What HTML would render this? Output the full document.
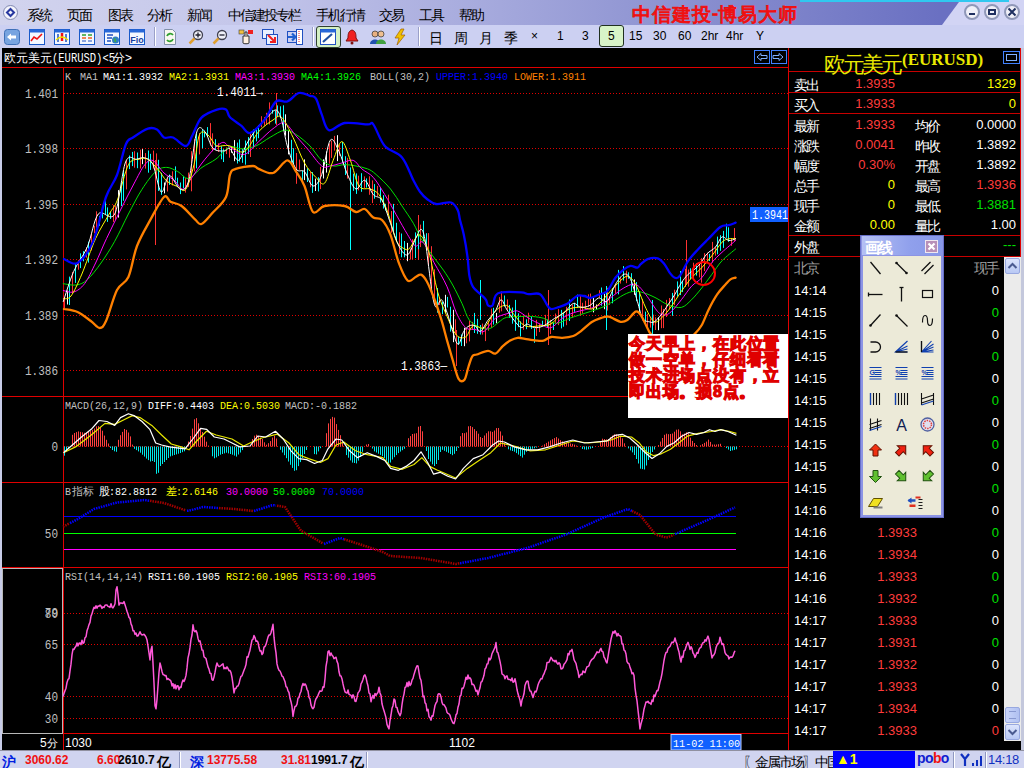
<!DOCTYPE html>
<html><head><meta charset="utf-8"><style>
*{box-sizing:border-box}
body{margin:0;width:1024px;height:768px;overflow:hidden;background:#000;position:relative;font-family:"Liberation Sans",sans-serif}
.a{position:absolute;white-space:nowrap}
.c{display:inline-block;width:0.86em;font-size:1.17em;font-style:normal;vertical-align:-1px}
#menu{left:0;top:0;width:1024px;height:25px;background:linear-gradient(to right,#d2d4ee 0px,#c4c6ea 250px,#a4a8dc 500px,#8288cc 750px,#6a70c2 940px)}
#menu .t{font-size:12px;top:6px;color:#000}
#tool{left:0;top:25px;width:1024px;height:23px;background:#ccd0f2}
#tool .t{font-size:12px;top:4px;color:#000}
.ic{position:absolute;top:4px;width:16px;height:16px}
.sep{position:absolute;top:2px;width:2px;height:19px;border-left:1px solid #9aa0c8;border-right:1px solid #fff}
.rp{font-size:12px;color:#fff}
.red{color:#ff3030}.yel{color:#ffff00}.grn{color:#00ff00}.wht{color:#fff}.gry{color:#a0a0a0}
.ttl .c{width:20px;font-size:19px}
#status{left:0;top:750px;width:1024px;height:18px;background:#d0d4f0;border-top:1px solid #9090a0}
#status .t{font-size:12px;top:2px;font-weight:bold}
</style></head><body>
<svg class="a" style="left:0;top:0" width="1024" height="768">
<rect x="0" y="48" width="2" height="702" fill="#c8cce8"/>
<line x1="2" y1="67.5" x2="788" y2="67.5" stroke="#e00000"/>
<line x1="2" y1="396.5" x2="788" y2="396.5" stroke="#e00000"/>
<line x1="2" y1="482.5" x2="788" y2="482.5" stroke="#e00000"/>
<line x1="2" y1="567.5" x2="788" y2="567.5" stroke="#e00000"/>
<line x1="2" y1="733.5" x2="788" y2="733.5" stroke="#e00000"/>
<line x1="63.5" y1="67" x2="63.5" y2="750" stroke="#e00000"/>
<line x1="788.5" y1="48" x2="788.5" y2="750" stroke="#e00000"/>
<line x1="64" y1="93.5" x2="788" y2="93.5" stroke="#e00000" stroke-dasharray="1 2"/>
<line x1="64" y1="148.5" x2="788" y2="148.5" stroke="#e00000" stroke-dasharray="1 2"/>
<line x1="64" y1="204.5" x2="788" y2="204.5" stroke="#e00000" stroke-dasharray="1 2"/>
<line x1="64" y1="259.5" x2="788" y2="259.5" stroke="#e00000" stroke-dasharray="1 2"/>
<line x1="64" y1="315.5" x2="788" y2="315.5" stroke="#e00000" stroke-dasharray="1 2"/>
<line x1="64" y1="370.5" x2="788" y2="370.5" stroke="#e00000" stroke-dasharray="1 2"/>
<line x1="64" y1="446.5" x2="788" y2="446.5" stroke="#e00000" stroke-dasharray="1 2"/>
<line x1="64" y1="613.5" x2="788" y2="613.5" stroke="#e00000" stroke-dasharray="1 2"/>
<line x1="64" y1="644.5" x2="788" y2="644.5" stroke="#e00000" stroke-dasharray="1 2"/>
<line x1="64" y1="696.5" x2="788" y2="696.5" stroke="#e00000" stroke-dasharray="1 2"/>
<line x1="64" y1="718.5" x2="788" y2="718.5" stroke="#e00000" stroke-dasharray="1 2"/>
<rect x="2.5" y="568.5" width="60" height="165" fill="none" stroke="#b8b8b8"/>
<line x1="64" y1="516.5" x2="736" y2="516.5" stroke="#0000ff"/>
<line x1="64" y1="533.5" x2="736" y2="533.5" stroke="#00ff00"/>
<line x1="64" y1="549.5" x2="736" y2="549.5" stroke="#ff00ff"/>
<path d="M64.5 297.1V308.0M72.5 271.9V293.3M78.5 260.1V269.7M86.5 247.1V257.6M91.5 233.0V250.4M94.5 225.8V233.3M96.5 211.3V227.8M113.5 205.1V221.9M115.5 205.6V220.1M126.5 160.0V189.4M134.5 151.2V167.7M140.5 149.6V168.5M145.5 153.1V168.6M153.5 150.6V168.5M156.5 153.4V178.0M167.5 177.8V191.5M172.5 171.3V185.5M185.5 178.2V192.6M188.5 172.6V187.1M191.5 151.2V191.3M194.5 138.9V171.4M199.5 133.0V154.4M210.5 123.1V145.7M212.5 133.3V151.3M218.5 143.2V152.0M226.5 147.4V154.1M229.5 148.2V157.7M250.5 133.3V157.0M261.5 116.2V127.3M264.5 117.1V125.7M266.5 112.8V124.4M269.5 102.4V124.5M296.5 153.0V183.8M299.5 159.5V169.7M310.5 172.0V187.2M320.5 166.9V189.1M329.5 143.6V163.7M331.5 140.7V157.9M334.5 135.9V150.6M339.5 144.8V155.8M347.5 157.8V178.6M358.5 175.7V190.4M364.5 176.4V188.1M369.5 176.3V194.8M372.5 180.4V203.1M377.5 185.9V196.5M388.5 194.7V214.7M391.5 211.0V232.7M399.5 232.2V254.0M410.5 248.5V259.6M412.5 239.2V259.4M420.5 224.6V247.1M428.5 233.1V265.3M431.5 246.2V293.8M434.5 269.3V304.6M439.5 297.7V305.0M455.5 319.3V334.7M466.5 328.9V343.3M469.5 320.5V341.4M472.5 321.9V330.0M482.5 323.6V334.6M485.5 325.8V341.1M488.5 321.2V330.7M491.5 308.6V328.0M499.5 297.1V312.8M501.5 291.1V311.3M507.5 299.4V309.7M523.5 316.0V329.8M528.5 312.7V323.1M536.5 319.8V336.0M539.5 323.6V332.1M545.5 314.8V325.7M550.5 319.8V334.1M555.5 313.5V323.4M558.5 309.2V325.1M566.5 306.8V325.2M572.5 304.8V317.7M580.5 295.2V315.6M582.5 302.8V313.6M585.5 300.7V309.0M588.5 294.3V306.9M590.5 293.6V308.2M599.5 290.2V297.9M607.5 287.8V310.5M609.5 296.2V304.8M615.5 284.0V293.6M620.5 277.8V283.6M626.5 270.7V283.2M642.5 299.0V320.6M647.5 313.8V328.5M650.5 318.5V327.6M653.5 314.6V325.4M655.5 317.3V330.0M661.5 305.5V328.2M663.5 308.9V328.1M666.5 299.9V317.0M669.5 298.0V309.6M674.5 289.7V305.2M685.5 268.7V287.0M688.5 269.5V286.6M693.5 262.7V278.8M699.5 263.8V277.4M701.5 258.1V282.7M704.5 253.2V271.1M707.5 252.7V261.1M712.5 241.9V262.7M715.5 246.5V255.7M731.5 238.7V245.8M734.5 228.1V241.5M155.5 160V245M276.5 93V125M456.5 330V366M548.5 290V345M686.5 240V285M418.5 215V260" stroke="#ff3232" stroke-width="1"/>
<path d="M69.5 276.6V305.0M75.5 263.4V282.9M80.5 253.4V268.1M83.5 251.2V261.3M88.5 241.7V262.6M99.5 216.0V225.9M102.5 208.7V218.4M105.5 200.0V214.7M107.5 207.4V221.9M110.5 211.6V219.0M121.5 183.1V206.0M123.5 170.0V200.8M129.5 155.5V169.1M132.5 151.9V166.1M137.5 152.5V168.2M148.5 150.5V172.7M150.5 153.8V169.9M158.5 159.8V190.9M161.5 172.8V194.8M169.5 174.5V184.9M175.5 166.4V180.6M177.5 177.7V185.5M180.5 182.5V194.1M183.5 175.9V188.3M196.5 133.3V168.3M202.5 129.1V148.3M204.5 130.5V137.4M207.5 127.1V137.0M215.5 139.2V149.9M221.5 146.3V159.3M223.5 149.2V162.0M237.5 142.6V163.5M239.5 139.5V161.6M242.5 148.9V162.8M245.5 140.5V164.7M248.5 137.1V154.1M253.5 129.5V147.7M256.5 128.3V141.4M258.5 125.0V138.2M272.5 109.9V113.7M275.5 110.6V123.6M277.5 105.4V117.0M280.5 106.3V118.0M283.5 105.3V130.5M291.5 139.8V164.0M293.5 148.2V164.4M302.5 170.9V180.3M307.5 168.2V182.0M312.5 172.1V192.9M318.5 177.2V191.4M342.5 142.0V163.3M345.5 156.2V175.0M350.5 167.4V186.6M353.5 173.7V190.8M356.5 173.4V193.9M361.5 173.2V191.8M366.5 178.4V187.6M374.5 184.1V198.7M380.5 188.1V202.6M383.5 195.2V208.6M385.5 203.8V210.6M393.5 203.9V231.0M396.5 222.8V241.7M401.5 233.5V257.3M404.5 241.0V257.3M415.5 232.4V258.0M418.5 230.9V249.3M423.5 220.9V241.3M426.5 233.2V248.4M437.5 288.0V312.7M442.5 301.8V314.2M447.5 296.9V307.5M450.5 306.7V331.6M458.5 336.7V344.8M461.5 334.4V346.0M474.5 312.9V333.0M477.5 318.8V333.8M480.5 325.0V334.5M493.5 307.8V324.6M504.5 295.5V306.5M509.5 304.9V317.9M512.5 307.5V323.7M515.5 299.9V330.8M518.5 313.3V327.2M520.5 321.4V336.5M526.5 319.3V329.2M531.5 316.6V328.9M534.5 328.5V342.8M542.5 320.7V325.5M547.5 319.6V327.1M553.5 322.8V330.0M561.5 309.9V328.4M563.5 313.1V326.7M569.5 299.5V321.0M574.5 302.8V311.8M577.5 294.6V307.9M601.5 287.5V305.7M612.5 288.0V303.3M618.5 269.9V294.4M623.5 266.1V280.6M628.5 272.3V278.7M631.5 273.2V291.5M636.5 282.1V301.3M639.5 291.2V313.4M645.5 311.6V323.4M672.5 292.9V315.8M677.5 281.4V296.5M680.5 271.0V295.1M682.5 281.0V292.1M690.5 268.3V279.1M696.5 263.0V275.6M709.5 253.9V261.0M717.5 236.6V254.3M720.5 235.2V250.8M723.5 230.9V247.9M726.5 223.7V237.8M728.5 227.3V241.8M350.5 180V250M652.5 300V340M606.5 286V330M480.5 280V320" stroke="#00ffff" stroke-width="1"/>
<path d="M67.5 290.6V304.5M118.5 190.1V217.6M142.5 149.1V164.2M164.5 182.5V193.4M231.5 146.8V152.7M234.5 140.1V161.2M285.5 114.3V135.7M288.5 130.0V154.4M304.5 159.4V180.1M315.5 178.6V191.0M323.5 159.3V178.5M326.5 151.5V172.6M337.5 135.2V161.1M407.5 242.9V261.2M445.5 294.8V313.3M453.5 309.8V342.2M464.5 327.7V346.2M496.5 312.9V323.2M593.5 296.6V312.4M596.5 304.5V309.9M604.5 291.9V309.2M634.5 279.4V294.8M658.5 317.3V330.2" stroke="#ffffff" stroke-width="1"/>
<path d="M63.3 283.7C65.5 283.9 72.4 285.7 76.4 285.0C80.4 284.3 83.3 283.3 87.4 279.6C91.5 275.9 96.5 269.4 101.0 263.0C105.5 256.6 110.1 249.5 114.7 241.3C119.3 233.1 123.9 222.7 128.4 214.0C133.0 205.3 137.4 196.4 142.0 189.3C146.6 182.2 151.6 175.2 155.7 171.5C159.8 167.8 163.0 167.4 166.7 167.4C170.3 167.4 173.9 169.7 177.6 171.5C181.2 173.3 184.5 179.1 188.6 178.4C192.7 177.7 197.4 170.6 202.0 167.4C206.6 164.2 211.4 162.4 216.0 159.0C220.6 155.6 225.3 148.7 229.6 147.0C233.8 145.3 237.1 149.0 241.5 148.8C245.9 148.6 251.0 147.9 255.8 146.0C260.6 144.1 265.3 139.9 270.1 137.3C274.9 134.7 280.2 130.7 284.5 130.2C288.8 129.7 291.8 131.9 296.0 134.5C300.2 137.1 305.7 141.7 310.0 146.0C314.3 150.3 317.8 157.0 321.7 160.3C325.6 163.6 329.4 165.3 333.2 166.0C337.0 166.7 340.8 164.6 344.6 164.6C348.4 164.6 352.2 165.3 356.0 166.0C359.8 166.7 364.2 167.5 367.6 168.9C371.0 170.3 372.4 171.2 376.2 174.6C380.0 177.9 386.2 183.8 390.5 189.0C394.8 194.2 398.2 200.3 402.0 206.0C405.8 211.7 410.2 217.9 413.4 223.3C416.6 228.7 417.9 233.3 421.0 238.6C424.1 243.9 428.6 250.1 432.3 255.3C436.0 260.6 440.0 265.2 443.4 270.1C446.8 275.1 449.6 279.4 452.7 285.0C455.8 290.6 459.2 297.6 462.0 303.5C464.8 309.4 466.3 316.2 469.4 320.2C472.5 324.2 477.1 326.2 480.5 327.6C483.9 329.0 486.7 329.5 489.8 328.6C492.9 327.7 496.2 323.9 499.0 322.0C501.8 320.1 502.8 318.3 506.5 317.4C510.2 316.5 517.0 316.6 521.3 316.5C525.6 316.4 528.8 316.2 532.5 316.5C536.2 316.8 540.5 317.4 543.6 318.3C546.7 319.2 548.5 321.2 551.0 322.0C553.5 322.8 555.4 323.6 558.5 323.0C561.6 322.4 565.9 319.7 569.6 318.3C573.3 316.9 575.6 316.3 580.7 314.6C585.8 312.9 595.1 310.1 600.0 308.2C604.9 306.3 606.3 305.4 610.3 303.1C614.3 300.9 619.9 296.7 623.9 294.7C627.9 292.7 630.6 291.6 634.0 291.3C637.4 291.0 640.5 291.9 644.2 293.0C647.9 294.1 652.0 296.0 656.0 298.0C660.0 300.0 663.8 303.2 668.0 304.8C672.2 306.4 677.5 308.2 681.4 307.4C685.3 306.5 688.2 302.9 691.6 299.7C695.0 296.4 698.4 292.1 701.8 287.9C705.2 283.7 708.5 278.8 711.9 274.3C715.3 269.8 718.0 265.0 722.0 260.8C726.0 256.6 733.3 251.0 735.6 249.0" fill="none" stroke="#00e000" stroke-width="1" stroke-linejoin="round" stroke-linecap="round"/>
<path d="M63.3 290.5C65.0 290.8 70.2 293.1 73.7 292.0C77.2 290.9 80.9 288.5 84.6 283.7C88.2 278.9 91.9 270.5 95.6 263.0C99.2 255.5 102.4 247.3 106.5 238.6C110.6 229.9 115.5 220.1 120.0 211.0C124.5 201.9 129.7 191.7 133.8 184.0C137.9 176.3 141.6 168.6 144.8 164.7C148.0 160.8 149.8 159.2 153.0 160.6C156.2 162.0 160.3 169.6 164.0 173.0C167.7 176.4 171.8 178.3 175.0 181.0C178.2 183.7 180.3 189.7 183.0 189.3C185.7 188.9 187.6 183.4 191.3 178.4C195.0 173.4 200.0 165.1 205.0 159.2C210.0 153.3 217.2 144.8 221.4 142.8C225.6 140.8 226.2 145.5 230.0 147.4C233.8 149.3 239.5 155.5 244.3 154.5C249.1 153.5 253.9 145.9 258.7 141.6C263.5 137.3 268.7 131.8 273.0 128.7C277.3 125.6 280.7 121.8 284.5 123.0C288.3 124.2 292.2 131.6 296.0 135.9C299.8 140.2 303.1 143.8 307.4 148.8C311.7 153.8 317.9 163.1 321.7 166.0C325.5 168.9 326.9 166.5 330.3 166.0C333.7 165.5 338.0 163.9 341.8 163.0C345.6 162.1 349.9 159.3 353.2 160.3C356.5 161.3 358.4 166.1 361.8 168.9C365.2 171.8 369.5 173.1 373.3 177.4C377.1 181.7 381.0 188.4 384.8 194.6C388.6 200.8 392.4 208.0 396.2 214.7C400.0 221.4 404.5 229.6 407.7 234.8C410.9 240.0 413.1 244.8 415.6 246.0C418.2 247.2 419.9 239.5 423.0 242.3C426.1 245.1 430.1 255.3 434.1 262.7C438.1 270.1 443.4 278.4 447.1 286.8C450.8 295.2 453.3 306.0 456.4 312.8C459.5 319.6 462.6 324.8 465.7 327.6C468.8 330.4 471.9 328.9 475.0 329.5C478.1 330.1 480.8 333.2 484.2 331.3C487.6 329.4 491.1 321.4 495.4 318.3C499.7 315.2 506.5 314.0 510.2 312.8C513.9 311.6 514.5 310.1 517.6 311.0C520.7 311.9 525.1 316.1 528.8 318.3C532.5 320.5 536.3 322.4 540.0 324.0C543.7 325.6 547.3 328.6 551.0 327.6C554.7 326.7 558.5 320.8 562.2 318.3C565.9 315.8 569.0 314.4 573.3 312.8C577.6 311.2 583.6 310.3 588.1 309.0C592.6 307.7 596.3 306.6 600.0 304.8C603.7 303.0 606.3 300.8 610.3 298.0C614.3 295.2 619.7 290.1 623.9 287.9C628.1 285.6 632.0 283.4 635.7 284.5C639.4 285.6 642.2 290.2 645.9 294.7C649.6 299.2 654.6 308.2 657.7 311.6C660.8 315.0 662.2 315.0 664.5 315.0C666.8 315.0 668.5 314.2 671.3 311.6C674.1 309.1 678.0 303.9 681.4 299.7C684.8 295.5 688.2 289.9 691.6 286.2C695.0 282.5 698.4 281.6 701.8 277.7C705.2 273.8 708.5 266.7 711.9 262.5C715.3 258.3 718.0 256.0 722.0 252.3C726.0 248.6 733.3 242.5 735.6 240.5" fill="none" stroke="#ff00ff" stroke-width="1" stroke-linejoin="round" stroke-linecap="round"/>
<path d="M63.3 298.7C64.6 298.2 67.9 300.1 71.0 296.0C74.1 291.9 77.8 283.6 81.9 274.0C86.0 264.4 91.0 248.6 95.6 238.6C100.1 228.6 105.6 220.4 109.2 214.0C112.8 207.6 114.2 208.2 117.4 200.0C120.6 191.8 124.8 171.5 128.4 164.7C132.1 157.9 136.1 160.1 139.3 159.2C142.5 158.3 144.3 157.4 147.5 159.2C150.7 161.0 155.3 166.4 158.5 170.0C161.7 173.6 163.5 178.2 166.7 181.0C169.9 183.8 174.4 185.2 177.6 186.6C180.8 188.0 183.1 193.0 185.8 189.3C188.5 185.7 191.7 173.8 194.0 164.7C196.3 155.6 197.2 139.6 199.5 134.6C201.8 129.6 204.9 132.8 207.7 134.6C210.4 136.4 213.3 143.8 216.0 145.6C218.7 147.4 221.7 145.5 224.0 145.6C226.3 145.7 226.6 145.0 230.0 146.0C233.4 147.0 239.5 154.0 244.3 151.6C249.1 149.2 253.9 136.9 258.7 131.6C263.5 126.3 269.2 122.4 273.0 120.0C276.8 117.6 278.3 114.4 281.6 117.3C284.9 120.2 289.2 129.7 293.0 137.3C296.8 144.9 300.7 156.3 304.5 163.0C308.3 169.7 312.6 174.0 316.0 177.4C319.4 180.8 321.7 186.0 324.6 183.2C327.5 180.3 330.3 167.2 333.2 160.3C336.1 153.4 338.9 141.6 341.8 141.6C344.7 141.6 347.5 152.9 350.4 160.3C353.3 167.7 355.7 181.2 359.0 186.0C362.3 190.8 367.1 187.6 370.4 189.0C373.7 190.4 376.1 190.8 379.0 194.6C381.9 198.4 384.7 204.2 387.6 211.8C390.5 219.5 393.3 234.3 396.2 240.5C399.1 246.7 402.5 247.8 404.8 249.0C407.1 250.2 407.6 250.2 410.0 247.8C412.4 245.4 416.2 234.2 419.3 234.8C422.4 235.4 425.5 241.9 428.6 251.5C431.7 261.1 434.7 281.6 437.8 292.4C440.9 303.2 444.0 309.4 447.1 316.5C450.2 323.6 453.3 331.6 456.4 335.0C459.5 338.4 462.9 338.4 465.7 336.9C468.5 335.4 469.9 327.4 473.0 325.8C476.1 324.2 480.5 330.1 484.2 327.6C487.9 325.1 491.7 314.7 495.4 311.0C499.1 307.3 503.4 304.8 506.5 305.4C509.6 306.0 510.9 311.2 514.0 314.6C517.1 318.0 520.7 323.9 525.0 325.8C529.3 327.7 535.7 326.1 540.0 325.8C544.3 325.5 547.9 325.6 551.0 324.0C554.1 322.4 555.4 319.0 558.5 316.5C561.6 314.0 565.9 310.6 569.6 309.0C573.3 307.4 577.0 307.2 580.7 307.2C584.4 307.2 588.6 309.7 591.8 309.0C595.0 308.3 596.9 305.9 600.0 303.0C603.1 300.1 606.3 295.5 610.3 291.3C614.3 287.1 620.5 280.0 623.9 277.7C627.3 275.4 628.4 276.0 630.6 277.7C632.9 279.4 634.9 282.8 637.4 287.9C639.9 293.0 643.1 302.5 645.9 308.2C648.7 313.9 651.5 320.4 654.3 321.8C657.1 323.2 660.0 319.2 662.8 316.7C665.6 314.1 668.2 310.7 671.3 306.5C674.4 302.3 678.0 296.1 681.4 291.3C684.8 286.5 688.2 281.6 691.6 277.7C695.0 273.8 698.4 271.3 701.8 267.6C705.2 263.9 708.5 259.9 711.9 255.7C715.3 251.5 719.2 245.0 722.0 242.2C724.8 239.4 726.5 239.4 728.8 238.8C731.1 238.2 734.5 238.8 735.6 238.8" fill="none" stroke="#ffff00" stroke-width="1" stroke-linejoin="round" stroke-linecap="round"/>
<path d="M63.3 301.5C65.0 296.5 69.7 280.5 73.7 271.4C77.7 262.3 83.3 256.4 87.4 246.8C91.5 237.2 93.8 219.5 98.3 214.0C102.8 208.5 110.2 222.7 114.7 214.0C119.2 205.3 121.9 171.1 125.6 162.0C129.2 152.9 133.4 159.9 136.6 159.2C139.8 158.5 142.1 157.0 144.8 157.9C147.5 158.8 150.3 159.0 153.0 164.7C155.7 170.4 158.5 190.2 161.2 192.0C163.9 193.8 166.2 176.0 169.4 175.6C172.6 175.2 177.1 188.4 180.3 189.3C183.5 190.2 185.8 190.6 188.6 181.0C191.3 171.4 194.1 140.1 196.8 131.9C199.5 123.7 202.3 129.2 205.0 131.9C207.7 134.6 209.8 145.1 213.0 148.3C216.2 151.5 221.2 150.9 224.0 151.0C226.8 151.1 227.6 147.2 230.0 148.8C232.4 150.4 235.7 161.3 238.6 160.3C241.5 159.3 243.8 148.7 247.2 143.0C250.5 137.3 255.3 130.2 258.7 125.9C262.1 121.6 264.4 120.0 267.3 117.3C270.2 114.6 273.5 109.5 275.9 110.0C278.3 110.5 279.7 114.0 281.6 120.0C283.5 126.0 284.9 137.8 287.3 146.0C289.7 154.2 293.1 164.6 296.0 168.9C298.9 173.2 301.7 168.8 304.5 171.7C307.3 174.5 310.1 185.5 313.0 186.0C315.9 186.5 318.8 182.2 321.7 174.6C324.6 167.0 327.4 144.0 330.3 140.2C333.2 136.4 336.1 145.9 339.0 151.6C341.9 157.3 344.7 168.4 347.5 174.6C350.3 180.8 353.1 188.1 356.0 189.0C358.9 189.9 361.8 179.4 364.7 180.3C367.6 181.2 370.4 191.2 373.3 194.6C376.2 197.9 379.1 195.6 382.0 200.4C384.9 205.2 387.7 215.7 390.5 223.3C393.3 230.9 396.1 240.9 399.0 246.2C401.9 251.4 404.9 256.1 407.7 254.8C410.5 253.5 413.4 242.8 415.6 238.6C417.8 234.3 419.5 229.3 421.0 229.3C422.5 229.3 423.5 232.4 424.8 238.6C426.1 244.8 427.4 257.1 428.6 266.4C429.9 275.7 431.1 287.4 432.3 294.2C433.5 301.0 434.5 306.3 436.0 307.2C437.5 308.1 439.6 298.9 441.5 299.8C443.4 300.7 445.2 307.6 447.1 312.8C449.0 318.1 450.9 326.1 452.7 331.3C454.5 336.6 456.3 344.3 458.2 344.3C460.1 344.3 461.9 334.4 463.8 331.3C465.7 328.2 467.5 326.7 469.4 325.8C471.3 324.9 473.1 324.9 475.0 325.8C476.9 326.7 478.3 332.2 480.5 331.3C482.7 330.4 485.5 323.6 488.0 320.2C490.5 316.8 493.2 314.4 495.4 311.0C497.6 307.6 499.1 300.1 501.0 299.8C502.9 299.5 504.3 305.6 506.5 309.0C508.7 312.4 511.5 317.1 514.0 320.2C516.5 323.3 519.1 327.0 521.3 327.6C523.5 328.2 524.8 324.0 527.0 324.0C529.2 324.0 531.5 327.3 534.3 327.6C537.1 327.9 540.2 327.4 543.6 325.8C547.0 324.2 551.3 320.5 554.7 318.3C558.1 316.1 560.9 315.3 564.0 312.8C567.1 310.3 570.5 304.4 573.3 303.5C576.1 302.6 577.9 306.9 580.7 307.2C583.5 307.5 587.0 306.9 590.0 305.4C593.0 303.9 595.7 298.7 598.5 298.0C601.3 297.3 604.2 303.6 607.0 301.4C609.8 299.1 612.6 289.0 615.4 284.5C618.2 280.0 621.4 275.2 623.9 274.3C626.4 273.4 628.4 274.9 630.6 279.4C632.9 283.9 635.4 294.9 637.4 301.4C639.4 307.9 640.5 315.0 642.5 318.4C644.5 321.8 647.3 321.2 649.3 321.8C651.3 322.4 652.3 322.9 654.3 321.8C656.2 320.7 658.7 317.8 661.0 315.0C663.3 312.2 665.7 308.2 668.0 304.8C670.3 301.4 672.5 298.4 674.7 294.7C676.9 291.0 679.1 286.2 681.4 282.8C683.6 279.4 685.4 277.1 688.2 274.3C691.0 271.5 695.3 269.3 698.4 265.9C701.5 262.5 704.0 257.1 706.8 254.0C709.6 250.9 712.8 250.1 715.3 247.3C717.8 244.5 719.8 238.1 722.0 237.0C724.2 235.9 726.5 240.2 728.8 240.5C731.1 240.8 734.5 239.1 735.6 238.8" fill="none" stroke="#ffffff" stroke-width="1" stroke-linejoin="round" stroke-linecap="round"/>
<path d="M64.0 259.0C66.2 259.7 72.7 265.9 77.5 263.0C82.3 260.1 88.2 252.6 93.0 241.6C97.8 230.6 102.0 208.1 106.0 197.0C110.0 185.9 113.7 183.8 117.0 175.0C120.3 166.2 123.3 150.2 126.0 144.0C128.7 137.8 129.3 140.1 133.0 137.5C136.7 134.9 144.0 129.9 148.0 128.6C152.0 127.3 154.3 128.0 157.0 129.5C159.7 131.0 161.3 136.2 164.0 137.5C166.7 138.8 169.3 136.1 173.0 137.5C176.7 138.9 182.7 146.4 186.0 146.0C189.3 145.6 190.0 139.7 192.6 135.0C195.2 130.3 197.4 121.8 201.5 117.6C205.6 113.4 212.9 110.9 217.0 109.6C221.1 108.3 223.8 108.3 226.0 109.6C228.2 110.9 227.4 114.6 230.0 117.3C232.6 120.0 238.2 123.3 241.5 125.9C244.8 128.5 246.2 134.0 250.0 133.0C253.8 132.0 260.1 125.2 264.4 120.0C268.7 114.8 272.2 104.6 276.0 101.5C279.8 98.4 283.5 102.9 287.3 101.5C291.1 100.1 295.0 94.0 298.8 93.0C302.6 92.0 307.1 94.9 310.0 95.8C312.9 96.7 314.1 95.5 316.0 98.6C317.9 101.7 319.6 109.1 321.7 114.4C323.8 119.7 325.1 128.8 328.9 130.2C332.7 131.6 338.2 124.0 344.6 123.0C351.1 122.0 362.8 124.2 367.6 124.4C372.4 124.6 370.4 120.8 373.3 124.4C376.2 128.0 380.0 140.5 384.8 146.0C389.6 151.5 397.2 151.7 402.0 157.4C406.8 163.1 410.4 174.6 413.4 180.3C416.4 186.0 417.7 188.7 420.0 191.8C422.3 194.9 424.3 197.0 427.0 199.0C429.7 201.0 432.0 203.4 436.0 204.0C440.0 204.6 447.4 201.5 451.0 202.5C454.6 203.5 456.2 207.1 457.7 210.0C459.2 212.9 459.0 215.9 460.0 220.0C461.0 224.1 462.6 228.6 463.8 234.8C465.1 241.0 466.6 250.2 467.5 257.0C468.4 263.8 468.5 270.7 469.4 275.7C470.3 280.7 471.1 283.7 473.0 286.8C474.9 289.9 478.3 292.0 480.5 294.2C482.7 296.4 484.8 297.9 486.0 299.8C487.2 301.7 486.9 304.5 488.0 305.4C489.1 306.3 491.4 307.0 492.6 305.4C493.8 303.8 494.0 298.2 495.4 296.0C496.8 293.8 496.7 293.0 501.0 292.4C505.3 291.8 516.7 292.1 521.3 292.4C525.9 292.7 525.7 293.9 528.8 294.2C531.9 294.5 536.9 292.3 540.0 294.2C543.1 296.1 545.5 302.9 547.3 305.4C549.1 307.9 549.1 308.7 551.0 309.0C552.9 309.3 555.7 308.1 558.5 307.2C561.3 306.3 564.6 305.4 567.7 303.5C570.8 301.6 574.2 297.2 577.0 296.0C579.8 294.8 582.2 295.7 584.4 296.0C586.6 296.3 587.6 298.2 590.0 298.0C592.4 297.8 595.7 295.8 598.5 294.7C601.3 293.6 604.2 294.1 607.0 291.3C609.8 288.5 612.6 281.4 615.4 277.7C618.2 274.0 621.4 271.3 623.9 269.3C626.4 267.3 628.4 266.2 630.6 265.9C632.9 265.6 635.7 267.9 637.4 267.6C639.1 267.3 639.1 265.6 640.8 264.2C642.5 262.8 644.8 260.1 647.6 259.1C650.4 258.1 654.9 257.5 657.7 258.3C660.5 259.1 662.5 261.8 664.5 264.2C666.5 266.6 667.9 270.4 669.6 272.6C671.3 274.9 673.0 277.1 674.7 277.7C676.4 278.3 677.5 278.8 679.7 276.0C682.0 273.2 685.1 265.3 688.2 260.8C691.3 256.3 695.0 252.7 698.4 249.0C701.8 245.3 704.8 242.5 708.5 238.8C712.2 235.1 717.0 229.3 720.4 227.0C723.8 224.7 726.3 225.9 728.8 225.2C731.3 224.5 734.5 223.1 735.6 222.7" fill="none" stroke="#0000ff" stroke-width="2.3" stroke-linejoin="round" stroke-linecap="round"/>
<path d="M64.0 309.0C66.2 309.5 73.0 310.0 77.5 312.0C82.0 314.0 87.1 318.3 90.8 321.0C94.5 323.7 97.1 328.0 99.6 328.0C102.1 328.0 103.1 327.3 106.0 321.0C108.9 314.7 113.3 297.3 117.0 290.0C120.7 282.7 125.1 284.3 128.4 277.0C131.7 269.7 133.3 255.6 137.0 246.0C140.7 236.4 146.1 227.6 150.6 219.4C155.1 211.2 160.7 199.9 164.0 197.0C167.3 194.1 167.6 200.2 170.5 201.7C173.4 203.2 177.5 203.1 181.6 206.0C185.7 208.9 191.7 216.4 195.0 219.4C198.3 222.4 198.6 225.1 201.5 224.0C204.4 222.9 208.5 217.3 212.6 212.8C216.7 208.3 223.1 203.4 226.0 197.0C228.9 190.6 228.4 179.3 230.0 174.6C231.6 169.9 231.9 170.3 235.7 168.9C239.5 167.5 249.2 166.0 253.0 166.0C256.8 166.0 255.4 167.7 258.7 168.9C262.0 170.1 268.2 174.4 273.0 173.0C277.8 171.6 283.5 160.5 287.3 160.3C291.1 160.1 293.1 167.4 296.0 171.7C298.9 176.0 301.7 179.3 304.5 186.0C307.3 192.7 309.6 208.7 313.0 212.0C316.4 215.3 319.3 207.0 324.6 206.0C329.9 205.0 339.4 205.0 344.6 206.0C349.8 207.0 352.6 211.5 356.0 212.0C359.4 212.5 361.8 208.1 364.7 209.0C367.6 209.9 370.4 215.8 373.3 217.6C376.2 219.4 379.1 217.1 382.0 220.0C384.9 222.9 387.7 227.6 390.5 234.8C393.3 242.0 396.1 255.8 399.0 263.4C401.9 271.0 404.9 278.3 407.7 280.6C410.5 282.9 413.4 278.0 415.6 277.0C417.8 276.0 419.1 274.0 421.0 274.7C422.9 275.4 424.5 277.3 426.7 281.2C428.9 285.1 431.5 291.5 434.0 298.0C436.5 304.5 439.3 313.1 441.5 320.2C443.7 327.3 445.2 334.0 447.1 340.6C449.0 347.2 450.8 353.6 452.7 360.0C454.6 366.4 456.6 375.5 458.6 378.8C460.6 382.1 462.9 381.7 464.5 379.7C466.1 377.7 467.1 370.9 468.4 367.0C469.7 363.1 470.9 358.4 472.3 356.3C473.7 354.2 474.2 355.4 476.8 354.5C479.4 353.6 484.9 350.9 488.0 350.8C491.1 350.7 492.9 354.4 495.4 353.6C497.9 352.8 500.3 348.4 502.8 346.2C505.3 344.0 507.7 342.0 510.2 340.6C512.7 339.2 515.1 338.1 517.6 337.8C520.1 337.5 521.9 338.3 525.0 338.8C528.1 339.3 533.1 340.3 536.2 340.6C539.3 340.9 541.1 341.2 543.6 340.6C546.1 340.0 547.9 337.5 551.0 337.0C554.1 336.5 558.5 338.0 562.2 337.8C565.9 337.6 570.2 337.1 573.3 336.0C576.4 334.9 577.6 333.6 580.7 331.3C583.8 329.0 588.6 324.1 591.8 322.0C595.0 319.9 597.2 319.3 600.0 318.4C602.8 317.5 605.2 316.1 608.6 316.7C612.0 317.3 617.4 321.2 620.5 321.8C623.6 322.4 624.8 321.7 627.3 320.0C629.8 318.3 633.5 312.4 635.7 311.6C638.0 310.8 638.8 312.2 640.8 315.0C642.8 317.8 645.9 325.3 647.6 328.5C649.3 331.7 648.9 331.8 651.0 334.0C653.1 336.2 654.3 340.7 660.0 342.0C665.7 343.3 679.2 343.4 685.0 342.0C690.8 340.6 692.2 336.4 695.0 333.6C697.8 330.8 699.5 328.9 701.8 325.0C704.0 321.1 706.0 315.1 708.5 310.0C711.0 304.9 714.2 298.9 717.0 294.7C719.8 290.4 723.2 287.1 725.5 284.5C727.8 281.9 728.8 280.5 730.5 279.4C732.2 278.3 734.8 278.0 735.6 277.7" fill="none" stroke="#ff8000" stroke-width="2.3" stroke-linejoin="round" stroke-linecap="round"/>
<circle cx="703.5" cy="273.5" r="11.5" fill="none" stroke="#ff0000" stroke-width="2"/>
<path d="M72.5 446.5V434.8M74.5 446.5V433.0M76.5 446.5V432.1M78.5 446.5V431.4M80.5 446.5V431.9M82.5 446.5V432.3M84.5 446.5V432.8M86.5 446.5V432.9M88.5 446.5V431.9M90.5 446.5V430.9M92.5 446.5V429.9M94.5 446.5V428.5M96.5 446.5V426.4M98.5 446.5V426.1M100.5 446.5V427.6M102.5 446.5V430.7M104.5 446.5V435.6M106.5 446.5V439.8M108.5 446.5V443.5M118.5 446.5V439.8M120.5 446.5V435.2M122.5 446.5V431.9M124.5 446.5V429.0M126.5 446.5V429.9M128.5 446.5V432.5M130.5 446.5V436.4M132.5 446.5V444.6M188.5 446.5V441.6M190.5 446.5V436.0M192.5 446.5V428.6M194.5 446.5V419.3M196.5 446.5V418.1M198.5 446.5V423.3M200.5 446.5V428.0M202.5 446.5V432.0M204.5 446.5V436.7M206.5 446.5V441.7M208.5 446.5V445.6M252.5 446.5V439.0M254.5 446.5V435.7M256.5 446.5V434.7M258.5 446.5V436.0M260.5 446.5V437.5M262.5 446.5V439.0M264.5 446.5V442.3M266.5 446.5V444.7M268.5 446.5V443.2M270.5 446.5V441.1M272.5 446.5V437.5M274.5 446.5V435.8M276.5 446.5V438.5M326.5 446.5V433.2M328.5 446.5V423.4M330.5 446.5V418.9M332.5 446.5V416.9M334.5 446.5V417.6M336.5 446.5V424.1M338.5 446.5V429.9M340.5 446.5V435.2M342.5 446.5V442.0M366.5 446.5V444.5M368.5 446.5V444.0M408.5 446.5V438.2M410.5 446.5V436.1M412.5 446.5V434.0M414.5 446.5V433.6M416.5 446.5V433.2M418.5 446.5V426.7M420.5 446.5V426.0M422.5 446.5V431.3M460.5 446.5V436.2M462.5 446.5V433.0M464.5 446.5V433.2M466.5 446.5V432.4M468.5 446.5V426.3M470.5 446.5V426.0M472.5 446.5V427.1M474.5 446.5V429.1M476.5 446.5V431.1M478.5 446.5V433.7M480.5 446.5V437.0M482.5 446.5V438.0M484.5 446.5V435.5M486.5 446.5V433.2M488.5 446.5V431.3M490.5 446.5V431.3M492.5 446.5V431.9M494.5 446.5V430.5M496.5 446.5V428.1M498.5 446.5V428.0M500.5 446.5V431.4M502.5 446.5V435.6M504.5 446.5V442.8M542.5 446.5V445.6M544.5 446.5V444.3M546.5 446.5V442.9M548.5 446.5V441.6M550.5 446.5V440.4M552.5 446.5V439.2M554.5 446.5V438.1M556.5 446.5V437.1M558.5 446.5V438.5M560.5 446.5V440.2M562.5 446.5V441.3M564.5 446.5V442.0M566.5 446.5V442.7M568.5 446.5V443.2M570.5 446.5V443.5M572.5 446.5V443.9M574.5 446.5V444.6M576.5 446.5V445.6M600.5 446.5V442.0M602.5 446.5V438.7M604.5 446.5V439.0M606.5 446.5V439.4M608.5 446.5V439.0M610.5 446.5V437.0M612.5 446.5V435.5M614.5 446.5V434.4M616.5 446.5V434.3M618.5 446.5V434.8M620.5 446.5V436.4M622.5 446.5V438.4M624.5 446.5V443.3M658.5 446.5V445.1M660.5 446.5V441.6M662.5 446.5V438.0M664.5 446.5V434.8M666.5 446.5V433.7M668.5 446.5V434.2M670.5 446.5V434.0M672.5 446.5V433.5M674.5 446.5V431.7M676.5 446.5V429.7M678.5 446.5V429.4M680.5 446.5V431.3M682.5 446.5V434.2M684.5 446.5V433.5M686.5 446.5V432.3M688.5 446.5V433.3M690.5 446.5V437.7M692.5 446.5V440.9M694.5 446.5V443.0M696.5 446.5V445.0M700.5 446.5V445.3M702.5 446.5V444.1M704.5 446.5V442.9M706.5 446.5V441.6M708.5 446.5V439.6M710.5 446.5V441.9M712.5 446.5V444.5M714.5 446.5V444.5M716.5 446.5V444.5M718.5 446.5V444.2M720.5 446.5V443.8" stroke="#ff4040"/>
<path d="M64.5 446.5V455.7M66.5 446.5V452.0M68.5 446.5V449.0M110.5 446.5V448.0M112.5 446.5V450.0M114.5 446.5V451.3M116.5 446.5V451.8M134.5 446.5V448.8M136.5 446.5V450.1M138.5 446.5V451.4M140.5 446.5V452.7M142.5 446.5V454.7M144.5 446.5V456.6M146.5 446.5V458.6M148.5 446.5V460.1M150.5 446.5V461.5M152.5 446.5V461.0M154.5 446.5V462.0M156.5 446.5V473.8M158.5 446.5V472.8M160.5 446.5V466.0M162.5 446.5V464.0M164.5 446.5V462.0M166.5 446.5V460.0M168.5 446.5V458.0M170.5 446.5V456.4M172.5 446.5V455.7M174.5 446.5V455.0M176.5 446.5V454.4M178.5 446.5V453.7M180.5 446.5V453.0M182.5 446.5V452.2M184.5 446.5V451.3M186.5 446.5V448.6M212.5 446.5V456.3M214.5 446.5V458.3M216.5 446.5V457.4M218.5 446.5V456.1M220.5 446.5V454.7M222.5 446.5V454.0M224.5 446.5V453.4M226.5 446.5V452.7M228.5 446.5V453.4M230.5 446.5V454.0M232.5 446.5V454.7M234.5 446.5V455.6M236.5 446.5V456.6M238.5 446.5V454.5M240.5 446.5V452.5M242.5 446.5V450.1M280.5 446.5V449.8M282.5 446.5V452.5M284.5 446.5V455.2M286.5 446.5V458.2M288.5 446.5V461.5M290.5 446.5V464.8M292.5 446.5V467.9M294.5 446.5V470.8M296.5 446.5V470.2M298.5 446.5V466.1M300.5 446.5V462.1M302.5 446.5V458.0M304.5 446.5V454.0M306.5 446.5V450.0M314.5 446.5V454.1M316.5 446.5V454.4M318.5 446.5V451.4M320.5 446.5V448.2M346.5 446.5V455.1M348.5 446.5V457.7M350.5 446.5V460.4M352.5 446.5V462.6M354.5 446.5V463.0M356.5 446.5V463.4M358.5 446.5V460.6M360.5 446.5V457.0M362.5 446.5V451.8M372.5 446.5V448.6M374.5 446.5V451.4M376.5 446.5V452.5M378.5 446.5V453.7M380.5 446.5V454.9M382.5 446.5V456.0M384.5 446.5V458.0M386.5 446.5V460.8M388.5 446.5V463.5M390.5 446.5V462.5M392.5 446.5V459.5M394.5 446.5V457.2M396.5 446.5V455.1M398.5 446.5V453.1M400.5 446.5V451.6M402.5 446.5V450.2M404.5 446.5V448.8M426.5 446.5V451.0M428.5 446.5V459.0M430.5 446.5V461.6M432.5 446.5V464.3M434.5 446.5V466.0M436.5 446.5V464.0M438.5 446.5V460.0M440.5 446.5V452.0M442.5 446.5V449.8M444.5 446.5V450.8M446.5 446.5V451.8M448.5 446.5V452.8M450.5 446.5V454.0M452.5 446.5V455.2M454.5 446.5V453.8M456.5 446.5V451.0M458.5 446.5V447.9M508.5 446.5V449.3M510.5 446.5V450.4M512.5 446.5V451.0M514.5 446.5V451.7M516.5 446.5V453.1M518.5 446.5V454.6M520.5 446.5V456.1M522.5 446.5V457.6M524.5 446.5V454.7M526.5 446.5V451.8M528.5 446.5V450.8M530.5 446.5V449.7M532.5 446.5V448.8M534.5 446.5V448.3M536.5 446.5V447.6M582.5 446.5V449.0M584.5 446.5V449.4M586.5 446.5V449.7M588.5 446.5V449.3M590.5 446.5V448.7M592.5 446.5V448.0M628.5 446.5V448.4M630.5 446.5V450.4M632.5 446.5V452.4M634.5 446.5V455.0M636.5 446.5V459.0M638.5 446.5V463.5M640.5 446.5V468.7M642.5 446.5V469.1M644.5 446.5V469.5M646.5 446.5V465.5M648.5 446.5V460.0M650.5 446.5V455.9M652.5 446.5V452.0M654.5 446.5V449.5M726.5 446.5V448.1M728.5 446.5V449.6M730.5 446.5V451.0M732.5 446.5V450.4M734.5 446.5V449.9M736.5 446.5V449.3" stroke="#00e8e8"/>
<polyline points="63.5,452.7 75.6,446.9 91.2,435.0 105.0,423.4 114.7,424.4 124.5,419.5 132.3,415.6 140.0,417.6 151.8,425.4 161.6,435.0 171.3,444.0 181.0,446.9 189.0,449.8 196.7,441.0 206.5,431.3 216.2,435.0 232.0,439.0 243.6,446.0 250.0,443.0 261.7,438.0 277.3,434.2 289.0,443.0 298.8,454.7 308.6,458.6 320.3,462.5 328.0,458.6 336.0,445.0 343.8,442.0 355.5,450.8 367.2,454.7 382.8,457.6 390.6,466.4 402.3,469.3 414.0,464.5 421.9,457.6 429.7,466.4 437.5,470.3 440.0,471.3 455.6,478.0 467.3,468.4 479.0,460.5 490.8,452.7 500.5,443.0 514.2,446.0 529.8,450.8 545.5,449.8 557.2,446.0 572.8,441.0 588.4,443.0 600.0,441.8 611.0,440.0 620.4,436.2 631.5,437.0 639.0,442.7 646.4,452.0 653.8,455.7 661.2,453.8 670.5,449.2 678.0,443.6 687.2,436.2 698.3,433.4 711.3,431.5 720.6,429.7 730.0,431.5 736.4,433.4" fill="none" stroke="#e8e800" stroke-width="1.2" stroke-linejoin="round" />
<polyline points="63.5,452.7 81.5,437.0 91.2,429.3 99.0,420.5 106.9,421.5 114.7,425.4 120.5,417.6 128.4,413.7 134.0,415.6 142.0,421.5 149.8,429.3 155.7,443.0 161.6,445.0 169.4,446.9 177.0,447.9 185.0,448.8 192.8,439.0 200.6,428.3 206.5,429.3 214.3,437.0 224.0,439.0 232.0,443.0 239.7,446.9 250.0,446.0 257.8,436.0 265.6,437.0 275.4,431.3 283.2,439.0 291.0,450.8 298.8,458.6 306.6,459.6 314.5,463.5 322.3,460.5 328.0,448.8 336.0,439.0 341.8,440.0 349.6,450.8 357.4,457.6 367.2,452.7 377.0,456.6 384.8,460.5 390.6,468.4 398.4,470.3 406.0,466.4 414.0,460.5 421.0,451.8 427.7,462.5 433.6,474.2 440.0,472.3 447.8,476.2 455.6,479.0 463.4,468.4 473.2,458.6 483.0,454.7 492.7,445.0 498.6,441.0 504.5,442.0 514.2,446.9 526.0,449.8 537.7,449.8 549.4,446.9 561.0,443.0 572.8,440.0 584.5,443.0 596.0,442.0 607.4,440.8 614.8,435.3 622.3,434.3 629.7,438.0 637.1,444.5 644.5,452.0 652.0,458.5 659.4,453.8 666.8,446.4 674.2,442.7 681.6,436.2 689.0,432.5 696.5,434.3 703.9,432.5 709.5,429.7 715.0,431.5 720.6,429.7 728.0,431.5 736.4,435.3" fill="none" stroke="#ffffff" stroke-width="1.2" stroke-linejoin="round" />
<polyline points="63.0,526.7 65.0,525.7 67.0,524.6 69.0,523.6" fill="none" stroke="#a00000" stroke-width="2.5" stroke-linejoin="round" stroke-dasharray="1.5 1"/>
<polyline points="70.0,523.1 72.0,522.1 74.0,521.1 76.0,520.0 78.0,519.0 80.0,517.8 82.0,516.5 84.0,515.2 86.0,514.0 88.0,512.8 90.0,511.5 92.0,510.2 94.0,509.0 96.0,508.4 98.0,507.9 100.0,507.3 102.0,506.7 104.0,506.2 106.0,505.6 108.0,505.0 110.0,504.5 112.0,503.9 114.0,503.3 116.0,502.8 118.0,502.4 120.0,502.2 122.0,502.0 124.0,501.9 126.0,501.7 128.0,501.5 130.0,501.3 132.0,501.1 134.0,501.0 136.0,500.8 138.0,500.6 140.0,500.4 142.0,500.2 144.0,500.0 146.0,500.2 148.0,500.5 150.0,500.8" fill="none" stroke="#0000ff" stroke-width="2.5" stroke-linejoin="round" stroke-dasharray="1.5 1"/>
<polyline points="150.0,500.8 152.0,501.2 154.0,501.5 156.0,501.8 158.0,502.1 160.0,502.4 162.0,502.7 164.0,503.0 166.0,503.7 168.0,504.4 170.0,505.0 172.0,505.7 174.0,506.4 176.0,507.1 178.0,507.8 180.0,508.4 182.0,509.1 184.0,509.8 186.0,510.5" fill="none" stroke="#a00000" stroke-width="2.5" stroke-linejoin="round" stroke-dasharray="1.5 1"/>
<polyline points="187.0,510.8 189.0,510.6 191.0,510.1 193.0,509.6 195.0,509.1 197.0,508.5 199.0,508.0 201.0,507.5 203.0,507.0 205.0,507.1 207.0,507.3 209.0,507.4 211.0,507.5 213.0,507.6 215.0,507.8 217.0,507.9 219.0,508.0" fill="none" stroke="#0000ff" stroke-width="2.5" stroke-linejoin="round" stroke-dasharray="1.5 1"/>
<polyline points="219.0,508.0 221.0,508.2 223.0,508.3 225.0,508.4 227.0,508.5 229.0,508.7 231.0,508.8 233.0,508.9 235.0,509.1 237.0,509.3 239.0,509.5 241.0,509.7 243.0,509.9 245.0,510.1 247.0,510.3 249.0,510.5 251.0,510.7 253.0,510.9" fill="none" stroke="#a00000" stroke-width="2.5" stroke-linejoin="round" stroke-dasharray="1.5 1"/>
<polyline points="254.0,511.0 256.0,510.4 258.0,509.7 260.0,509.1 262.0,508.5 264.0,507.8 266.0,507.2 268.0,506.6 270.0,505.9 272.0,505.3 274.0,505.2 276.0,505.5" fill="none" stroke="#0000ff" stroke-width="2.5" stroke-linejoin="round" stroke-dasharray="1.5 1"/>
<polyline points="277.0,505.7 279.0,506.0 281.0,506.3 283.0,506.7 285.0,507.0 287.0,510.0 289.0,513.0 291.0,516.0 293.0,518.9 295.0,521.9 297.0,524.9 299.0,527.9 301.0,530.7 303.0,531.9 305.0,533.0 307.0,534.2 309.0,535.3 311.0,536.5 313.0,537.6 315.0,538.8 317.0,540.0 319.0,541.1 321.0,542.3 323.0,543.4" fill="none" stroke="#a00000" stroke-width="2.5" stroke-linejoin="round" stroke-dasharray="1.5 1"/>
<polyline points="324.0,544.0 326.0,543.2 328.0,542.5 330.0,541.8 332.0,541.0 334.0,540.2 336.0,539.5 338.0,538.8 340.0,538.0 342.0,538.6 344.0,539.3" fill="none" stroke="#0000ff" stroke-width="2.5" stroke-linejoin="round" stroke-dasharray="1.5 1"/>
<polyline points="344.0,539.3 346.0,539.9 348.0,540.5 350.0,541.2 352.0,541.8 354.0,542.4 356.0,543.1 358.0,543.7 360.0,544.3 362.0,545.0 364.0,545.7 366.0,546.3 368.0,547.0 370.0,547.7 372.0,548.3 374.0,549.0 376.0,549.7 378.0,550.3 380.0,551.0 382.0,551.7 384.0,552.6 386.0,553.7 388.0,554.9 390.0,556.0 392.0,556.1 394.0,556.3 396.0,556.4 398.0,556.5 400.0,556.6 402.0,556.8 404.0,556.9 406.0,557.0 408.0,557.2 410.0,557.3 412.0,557.4 414.0,557.5 416.0,557.7 418.0,557.8 420.0,557.9 422.0,558.2 424.0,558.5 426.0,558.9 428.0,559.2 430.0,559.5 432.0,559.9 434.0,560.2 436.0,560.6 438.0,560.9 440.0,561.3 442.0,561.6 444.0,561.9 446.0,562.3 448.0,562.6 450.0,563.0 452.0,563.3 454.0,563.7 456.0,564.0 458.0,563.6 460.0,563.2" fill="none" stroke="#a00000" stroke-width="2.5" stroke-linejoin="round" stroke-dasharray="1.5 1"/>
<polyline points="460.0,563.2 462.0,562.9 464.0,562.5 466.0,562.1 468.0,561.8 470.0,561.4 472.0,561.0 474.0,560.6 476.0,560.2 478.0,559.9 480.0,559.5 482.0,559.1 484.0,558.8 486.0,558.4 488.0,558.0 490.0,557.5 492.0,557.0 494.0,556.5 496.0,555.9 498.0,555.4 500.0,554.9 502.0,554.4 504.0,553.9 506.0,553.4 508.0,552.9 510.0,552.4 512.0,551.8 514.0,551.3 516.0,550.8 518.0,550.3 520.0,549.8 522.0,549.3 524.0,548.8 526.0,548.3 528.0,547.7 530.0,547.0 532.0,546.3 534.0,545.6 536.0,544.9 538.0,544.2 540.0,543.5 542.0,542.8 544.0,542.1 546.0,541.4 548.0,540.7 550.0,540.0 552.0,539.3 554.0,538.7 556.0,538.0 558.0,537.3 560.0,536.6 562.0,535.9 564.0,535.2 566.0,534.5 568.0,533.6 570.0,532.7 572.0,531.8 574.0,530.9 576.0,530.0 578.0,529.1 580.0,528.2 582.0,527.3 584.0,526.4 586.0,525.5 588.0,524.6 590.0,523.7 592.0,522.8 594.0,521.9 596.0,521.0 598.0,520.1 600.0,519.2 602.0,518.3 604.0,517.4 606.0,516.7 608.0,516.0 610.0,515.3 612.0,514.6 614.0,513.9 616.0,513.2 618.0,512.5 620.0,511.8 622.0,511.1 624.0,510.4 626.0,509.7 628.0,509.0 630.0,510.0 632.0,511.0" fill="none" stroke="#0000ff" stroke-width="2.5" stroke-linejoin="round" stroke-dasharray="1.5 1"/>
<polyline points="632.0,511.0 634.0,512.0 636.0,513.0 638.0,514.0 640.0,515.0 642.0,517.5 644.0,520.0 646.0,522.5 648.0,525.0 650.0,527.5 652.0,530.0 654.0,532.5 656.0,534.6 658.0,535.2 660.0,535.7 662.0,536.3 664.0,536.9 666.0,537.4 668.0,537.3 670.0,536.4 672.0,535.5 674.0,534.6" fill="none" stroke="#a00000" stroke-width="2.5" stroke-linejoin="round" stroke-dasharray="1.5 1"/>
<polyline points="675.0,534.2 677.0,533.3 679.0,532.4 681.0,531.5 683.0,530.6 685.0,529.7 687.0,528.9 689.0,528.0 691.0,527.2 693.0,526.3 695.0,525.4 697.0,524.6 699.0,523.7 701.0,522.9 703.0,522.0 705.0,521.1 707.0,520.3 709.0,519.4 711.0,518.5 713.0,517.6 715.0,516.7 717.0,515.7 719.0,514.8 721.0,513.9 723.0,512.9 725.0,512.0 727.0,511.1 729.0,510.1 731.0,509.2 733.0,508.3 735.0,507.3" fill="none" stroke="#0000ff" stroke-width="2.5" stroke-linejoin="round" stroke-dasharray="1.5 1"/>
<polyline points="63.0,696.5 64.0,693.6 65.0,690.8 66.0,688.2 67.0,682.5 68.0,679.4 69.0,678.7 70.0,670.9 71.0,664.2 72.0,654.7 73.0,649.1 74.0,649.5 75.0,647.4 76.0,646.2 77.0,642.9 78.0,645.9 79.0,643.3 80.0,642.9 81.0,644.7 82.0,640.2 83.0,643.3 84.0,642.6 85.0,637.7 86.0,636.8 87.0,630.8 88.0,627.9 89.0,624.6 90.0,622.4 91.0,616.1 92.0,613.7 93.0,610.1 94.0,607.3 95.0,608.5 96.0,605.7 97.0,608.2 98.0,606.0 99.0,606.4 100.0,605.1 101.0,606.1 102.0,608.4 103.0,606.8 104.0,607.5 105.0,605.2 106.0,605.1 107.0,605.0 108.0,606.4 109.0,606.7 110.0,607.4 111.0,603.7 112.0,607.1 113.0,607.9 114.0,606.2 115.0,603.7 116.0,590.0 117.0,586.7 118.0,594.5 119.0,605.1 120.0,603.1 121.0,603.0 122.0,603.2 123.0,603.4 124.0,601.6 125.0,604.7 126.0,607.9 127.0,611.3 128.0,614.0 129.0,617.5 130.0,618.4 131.0,623.9 132.0,626.1 133.0,630.8 134.0,630.8 135.0,634.4 136.0,633.0 137.0,635.9 138.0,635.9 139.0,633.9 140.0,631.8 141.0,634.0 142.0,634.9 143.0,634.8 144.0,634.2 145.0,635.5 146.0,637.1 147.0,639.9 148.0,646.1 149.0,652.8 150.0,659.9 151.0,649.6 152.0,646.3 153.0,663.1 154.0,683.0 155.0,705.8 156.0,708.8 157.0,699.3 158.0,685.7 159.0,672.3 160.0,662.9 161.0,666.8 162.0,671.4 163.0,674.5 164.0,674.9 165.0,675.8 166.0,675.5 167.0,679.5 168.0,678.6 169.0,679.5 170.0,680.1 171.0,681.3 172.0,685.9 173.0,683.6 174.0,688.4 175.0,684.5 176.0,688.9 177.0,685.7 178.0,685.7 179.0,689.7 180.0,687.1 181.0,687.5 182.0,682.7 183.0,679.9 184.0,681.5 185.0,679.1 186.0,675.4 187.0,667.9 188.0,657.9 189.0,653.8 190.0,647.4 191.0,639.4 192.0,635.0 193.0,624.8 194.0,630.7 195.0,631.8 196.0,630.6 197.0,632.9 198.0,638.4 199.0,641.6 200.0,640.9 201.0,645.1 202.0,650.1 203.0,650.3 204.0,656.7 205.0,657.7 206.0,658.5 207.0,662.9 208.0,666.9 209.0,669.1 210.0,673.2 211.0,673.4 212.0,679.6 213.0,680.3 214.0,677.1 215.0,672.4 216.0,666.8 217.0,663.0 218.0,665.4 219.0,666.6 220.0,666.2 221.0,665.5 222.0,664.5 223.0,663.8 224.0,668.8 225.0,667.8 226.0,668.8 227.0,666.8 228.0,668.5 229.0,670.8 230.0,670.5 231.0,672.6 232.0,677.5 233.0,684.4 234.0,692.9 235.0,688.6 236.0,688.4 237.0,686.3 238.0,686.0 239.0,683.8 240.0,679.4 241.0,676.3 242.0,675.8 243.0,673.0 244.0,670.3 245.0,667.8 246.0,664.6 247.0,656.8 248.0,657.2 249.0,653.5 250.0,650.2 251.0,645.1 252.0,640.0 253.0,639.3 254.0,635.5 255.0,637.5 256.0,641.3 257.0,641.0 258.0,642.3 259.0,647.3 260.0,651.1 261.0,650.7 262.0,654.5 263.0,653.0 264.0,647.1 265.0,646.5 266.0,644.4 267.0,640.9 268.0,637.1 269.0,634.9 270.0,635.0 271.0,632.7 272.0,628.6 273.0,624.3 274.0,637.2 275.0,646.3 276.0,652.9 277.0,663.9 278.0,667.9 279.0,670.3 280.0,671.0 281.0,673.2 282.0,676.2 283.0,676.7 284.0,679.2 285.0,681.6 286.0,686.6 287.0,687.4 288.0,690.9 289.0,692.5 290.0,698.3 291.0,701.7 292.0,706.5 293.0,716.5 294.0,710.5 295.0,706.4 296.0,706.2 297.0,704.2 298.0,698.2 299.0,697.6 300.0,693.5 301.0,691.5 302.0,686.2 303.0,683.5 304.0,685.4 305.0,683.9 306.0,685.4 307.0,689.3 308.0,691.2 309.0,697.3 310.0,699.0 311.0,705.0 312.0,707.6 313.0,708.6 314.0,707.3 315.0,701.8 316.0,698.7 317.0,697.5 318.0,695.4 319.0,692.9 320.0,690.8 321.0,691.3 322.0,690.9 323.0,686.8 324.0,687.2 325.0,678.8 326.0,666.3 327.0,660.7 328.0,651.5 329.0,650.8 330.0,655.7 331.0,652.9 332.0,655.2 333.0,656.3 334.0,658.6 335.0,657.8 336.0,657.2 337.0,661.4 338.0,663.8 339.0,671.8 340.0,675.8 341.0,675.9 342.0,678.9 343.0,683.9 344.0,688.3 345.0,691.8 346.0,692.6 347.0,693.1 348.0,689.9 349.0,694.4 350.0,694.8 351.0,695.3 352.0,698.0 353.0,694.8 354.0,696.7 355.0,701.2 356.0,701.4 357.0,697.4 358.0,692.9 359.0,691.6 360.0,689.8 361.0,683.8 362.0,682.2 363.0,679.2 364.0,675.8 365.0,674.9 366.0,677.6 367.0,682.2 368.0,686.0 369.0,693.0 370.0,693.9 371.0,701.7 372.0,697.6 373.0,695.4 374.0,698.4 375.0,693.4 376.0,695.5 377.0,693.7 378.0,692.4 379.0,687.2 380.0,693.0 381.0,695.4 382.0,703.8 383.0,707.6 384.0,710.8 385.0,714.1 386.0,717.8 387.0,724.4 388.0,726.9 389.0,728.9 390.0,720.5 391.0,715.0 392.0,708.3 393.0,705.7 394.0,699.0 395.0,700.3 396.0,707.2 397.0,707.5 398.0,711.6 399.0,713.6 400.0,715.7 401.0,712.9 402.0,704.7 403.0,698.1 404.0,694.1 405.0,687.5 406.0,686.9 407.0,682.6 408.0,686.6 409.0,681.6 410.0,685.5 411.0,684.0 412.0,680.1 413.0,678.4 414.0,674.4 415.0,671.3 416.0,668.0 417.0,665.8 418.0,666.0 419.0,672.3 420.0,678.1 421.0,680.3 422.0,687.5 423.0,696.8 424.0,696.0 425.0,702.7 426.0,704.0 427.0,710.8 428.0,709.4 429.0,716.7 430.0,717.8 431.0,720.2 432.0,715.8 433.0,716.2 434.0,710.9 435.0,705.5 436.0,703.0 437.0,701.6 438.0,694.4 439.0,693.7 440.0,694.1 441.0,696.9 442.0,702.4 443.0,704.7 444.0,704.7 445.0,706.4 446.0,708.1 447.0,712.3 448.0,713.4 449.0,713.9 450.0,715.2 451.0,718.8 452.0,721.0 453.0,723.1 454.0,723.6 455.0,720.2 456.0,714.8 457.0,713.5 458.0,707.2 459.0,704.1 460.0,696.1 461.0,695.2 462.0,688.2 463.0,688.4 464.0,686.2 465.0,682.0 466.0,677.2 467.0,679.4 468.0,674.9 469.0,678.8 470.0,677.8 471.0,679.4 472.0,684.6 473.0,684.2 474.0,685.2 475.0,688.2 476.0,691.3 477.0,690.3 478.0,694.9 479.0,691.0 480.0,687.8 481.0,682.2 482.0,681.6 483.0,678.6 484.0,675.3 485.0,669.0 486.0,667.8 487.0,664.0 488.0,663.7 489.0,658.0 490.0,659.9 491.0,658.1 492.0,653.7 493.0,651.6 494.0,649.5 495.0,647.4 496.0,642.6 497.0,651.9 498.0,652.8 499.0,657.1 500.0,661.3 501.0,666.6 502.0,674.0 503.0,674.7 504.0,675.3 505.0,678.7 506.0,676.5 507.0,675.9 508.0,679.2 509.0,679.4 510.0,679.4 511.0,680.7 512.0,678.0 513.0,682.2 514.0,681.8 515.0,678.7 516.0,683.4 517.0,689.5 518.0,693.8 519.0,696.9 520.0,700.4 521.0,706.0 522.0,699.9 523.0,697.3 524.0,693.8 525.0,685.4 526.0,682.7 527.0,681.1 528.0,681.2 529.0,687.5 530.0,691.1 531.0,691.3 532.0,694.5 533.0,697.6 534.0,694.0 535.0,691.3 536.0,692.0 537.0,689.2 538.0,685.0 539.0,682.3 540.0,680.4 541.0,678.6 542.0,678.9 543.0,675.7 544.0,673.9 545.0,671.0 546.0,668.9 547.0,662.5 548.0,662.5 549.0,662.3 550.0,659.9 551.0,657.3 552.0,658.9 553.0,660.8 554.0,660.3 555.0,661.9 556.0,660.4 557.0,663.0 558.0,664.2 559.0,662.6 560.0,664.0 561.0,668.9 562.0,668.8 563.0,667.7 564.0,664.2 565.0,663.2 566.0,661.7 567.0,659.7 568.0,653.6 569.0,654.7 570.0,650.9 571.0,651.0 572.0,649.3 573.0,654.2 574.0,659.6 575.0,661.7 576.0,663.3 577.0,668.2 578.0,671.4 579.0,677.5 580.0,675.3 581.0,674.2 582.0,674.7 583.0,670.9 584.0,672.0 585.0,672.6 586.0,669.2 587.0,666.8 588.0,666.5 589.0,665.7 590.0,662.3 591.0,660.7 592.0,659.3 593.0,658.6 594.0,657.7 595.0,655.7 596.0,654.0 597.0,651.8 598.0,652.6 599.0,652.6 600.0,650.0 601.0,648.4 602.0,651.4 603.0,651.9 604.0,657.1 605.0,658.5 606.0,661.6 607.0,663.0 608.0,656.8 609.0,650.6 610.0,644.8 611.0,639.3 612.0,635.3 613.0,631.6 614.0,633.1 615.0,630.8 616.0,633.0 617.0,636.0 618.0,633.4 619.0,635.5 620.0,635.7 621.0,636.8 622.0,643.9 623.0,644.1 624.0,650.2 625.0,650.8 626.0,654.0 627.0,661.7 628.0,663.2 629.0,663.6 630.0,667.4 631.0,669.9 632.0,673.7 633.0,672.8 634.0,675.6 635.0,687.8 636.0,695.2 637.0,700.8 638.0,710.2 639.0,718.8 640.0,728.9 641.0,723.9 642.0,720.3 643.0,715.4 644.0,709.2 645.0,705.6 646.0,701.9 647.0,702.3 648.0,701.2 649.0,703.1 650.0,703.1 651.0,704.4 652.0,700.1 653.0,701.5 654.0,694.9 655.0,696.5 656.0,693.3 657.0,690.6 658.0,690.7 659.0,686.5 660.0,681.9 661.0,678.5 662.0,673.6 663.0,667.0 664.0,660.5 665.0,655.6 666.0,652.5 667.0,652.2 668.0,648.4 669.0,647.3 670.0,646.5 671.0,644.0 672.0,642.0 673.0,642.7 674.0,641.4 675.0,638.0 676.0,641.7 677.0,644.3 678.0,648.8 679.0,652.0 680.0,658.0 681.0,662.0 682.0,656.3 683.0,657.2 684.0,650.9 685.0,650.3 686.0,647.0 687.0,644.3 688.0,642.3 689.0,645.2 690.0,649.4 691.0,646.7 692.0,648.6 693.0,653.0 694.0,654.4 695.0,657.4 696.0,655.1 697.0,652.5 698.0,653.3 699.0,649.4 700.0,647.9 701.0,647.3 702.0,644.3 703.0,642.7 704.0,642.4 705.0,639.7 706.0,641.2 707.0,638.4 708.0,636.1 709.0,639.4 710.0,646.2 711.0,651.8 712.0,658.0 713.0,655.6 714.0,654.7 715.0,652.6 716.0,647.8 717.0,645.1 718.0,643.5 719.0,642.9 720.0,637.2 721.0,640.6 722.0,644.5 723.0,643.7 724.0,646.9 725.0,652.7 726.0,654.4 727.0,655.3 728.0,655.8 729.0,658.9 730.0,657.2 731.0,657.1 732.0,657.2 733.0,655.9 734.0,652.9 735.0,650.8" fill="none" stroke="#ff58d8" stroke-width="1.5" stroke-linejoin="round" />
<text x="65" y="80" fill="#c0c0c0" font-family="Liberation Mono" font-size="11" text-anchor="start" font-weight="normal" textLength="6.0" lengthAdjust="spacingAndGlyphs">K</text>
<text x="80" y="80" fill="#c0c0c0" font-family="Liberation Mono" font-size="11" text-anchor="start" font-weight="normal" textLength="18.0" lengthAdjust="spacingAndGlyphs">MA1</text>
<text x="103" y="80" fill="#ffffff" font-family="Liberation Mono" font-size="11" text-anchor="start" font-weight="normal" textLength="60.0" lengthAdjust="spacingAndGlyphs">MA1:1.3932</text>
<text x="169" y="80" fill="#ffff00" font-family="Liberation Mono" font-size="11" text-anchor="start" font-weight="normal" textLength="60.0" lengthAdjust="spacingAndGlyphs">MA2:1.3931</text>
<text x="235" y="80" fill="#ff00ff" font-family="Liberation Mono" font-size="11" text-anchor="start" font-weight="normal" textLength="60.0" lengthAdjust="spacingAndGlyphs">MA3:1.3930</text>
<text x="301" y="80" fill="#00ff00" font-family="Liberation Mono" font-size="11" text-anchor="start" font-weight="normal" textLength="60.0" lengthAdjust="spacingAndGlyphs">MA4:1.3926</text>
<text x="370" y="80" fill="#c0c0c0" font-family="Liberation Mono" font-size="11" text-anchor="start" font-weight="normal" textLength="60.0" lengthAdjust="spacingAndGlyphs">BOLL(30,2)</text>
<text x="436" y="80" fill="#0000ff" font-family="Liberation Mono" font-size="11" text-anchor="start" font-weight="normal" textLength="72.0" lengthAdjust="spacingAndGlyphs">UPPER:1.3940</text>
<text x="514" y="80" fill="#ff8000" font-family="Liberation Mono" font-size="11" text-anchor="start" font-weight="normal" textLength="72.0" lengthAdjust="spacingAndGlyphs">LOWER:1.3911</text>
<text x="58" y="98.0" fill="#c0c0c0" font-family="Liberation Mono" font-size="13" text-anchor="end" font-weight="normal" textLength="33.0" lengthAdjust="spacingAndGlyphs">1.401</text>
<text x="58" y="153.0" fill="#c0c0c0" font-family="Liberation Mono" font-size="13" text-anchor="end" font-weight="normal" textLength="33.0" lengthAdjust="spacingAndGlyphs">1.398</text>
<text x="58" y="209.0" fill="#c0c0c0" font-family="Liberation Mono" font-size="13" text-anchor="end" font-weight="normal" textLength="33.0" lengthAdjust="spacingAndGlyphs">1.395</text>
<text x="58" y="264.0" fill="#c0c0c0" font-family="Liberation Mono" font-size="13" text-anchor="end" font-weight="normal" textLength="33.0" lengthAdjust="spacingAndGlyphs">1.392</text>
<text x="58" y="320.0" fill="#c0c0c0" font-family="Liberation Mono" font-size="13" text-anchor="end" font-weight="normal" textLength="33.0" lengthAdjust="spacingAndGlyphs">1.389</text>
<text x="58" y="375.0" fill="#c0c0c0" font-family="Liberation Mono" font-size="13" text-anchor="end" font-weight="normal" textLength="33.0" lengthAdjust="spacingAndGlyphs">1.386</text>
<text x="217" y="95.5" fill="#ffffff" font-family="Liberation Mono" font-size="13" text-anchor="start" font-weight="normal" textLength="46.2" lengthAdjust="spacingAndGlyphs">1.4011→</text>
<text x="401" y="370" fill="#ffffff" font-family="Liberation Mono" font-size="13" text-anchor="start" font-weight="normal" textLength="46.2" lengthAdjust="spacingAndGlyphs">1.3863—</text>
<rect x="750" y="207" width="38" height="15" fill="#1060ff"/>
<text x="752" y="219" fill="#ffffff" font-family="Liberation Mono" font-size="12" text-anchor="start" font-weight="normal" textLength="36.0" lengthAdjust="spacingAndGlyphs">1.3941</text>
<text x="65" y="409" fill="#c0c0c0" font-family="Liberation Mono" font-size="11" text-anchor="start" font-weight="normal" textLength="78.0" lengthAdjust="spacingAndGlyphs">MACD(26,12,9)</text>
<text x="148" y="409" fill="#ffffff" font-family="Liberation Mono" font-size="11" text-anchor="start" font-weight="normal" textLength="66.0" lengthAdjust="spacingAndGlyphs">DIFF:0.4403</text>
<text x="220" y="409" fill="#ffff00" font-family="Liberation Mono" font-size="11" text-anchor="start" font-weight="normal" textLength="60.0" lengthAdjust="spacingAndGlyphs">DEA:0.5030</text>
<text x="285" y="409" fill="#c0c0c0" font-family="Liberation Mono" font-size="11" text-anchor="start" font-weight="normal" textLength="72.0" lengthAdjust="spacingAndGlyphs">MACD:-0.1882</text>
<text x="58" y="451" fill="#c0c0c0" font-family="Liberation Mono" font-size="13" text-anchor="end" font-weight="normal" textLength="6.6" lengthAdjust="spacingAndGlyphs">0</text>
<text x="65" y="495" fill="#c0c0c0" font-family="Liberation Mono" font-size="11" text-anchor="start" font-weight="normal" textLength="6.0" lengthAdjust="spacingAndGlyphs">B</text>
<text x="72.0" y="495" fill="#c0c0c0" font-family="Liberation Sans" font-size="11" font-weight="normal">指</text><text x="82.8" y="495" fill="#c0c0c0" font-family="Liberation Sans" font-size="11" font-weight="normal">标</text>
<text x="99.0" y="495" fill="#ffffff" font-family="Liberation Sans" font-size="11" font-weight="normal">股</text>
<text x="109" y="495" fill="#ffffff" font-family="Liberation Mono" font-size="11" text-anchor="start" font-weight="normal" textLength="48.0" lengthAdjust="spacingAndGlyphs">:82.8812</text>
<text x="166.0" y="495" fill="#ffff00" font-family="Liberation Sans" font-size="11" font-weight="normal">差</text>
<text x="176" y="495" fill="#ffff00" font-family="Liberation Mono" font-size="11" text-anchor="start" font-weight="normal" textLength="42.0" lengthAdjust="spacingAndGlyphs">:2.6146</text>
<text x="226" y="495" fill="#ff00ff" font-family="Liberation Mono" font-size="11" text-anchor="start" font-weight="normal" textLength="42.0" lengthAdjust="spacingAndGlyphs">30.0000</text>
<text x="273" y="495" fill="#00ff00" font-family="Liberation Mono" font-size="11" text-anchor="start" font-weight="normal" textLength="42.0" lengthAdjust="spacingAndGlyphs">50.0000</text>
<text x="322" y="495" fill="#0000ff" font-family="Liberation Mono" font-size="11" text-anchor="start" font-weight="normal" textLength="42.0" lengthAdjust="spacingAndGlyphs">70.0000</text>
<text x="58" y="538" fill="#c0c0c0" font-family="Liberation Mono" font-size="13" text-anchor="end" font-weight="normal" textLength="13.2" lengthAdjust="spacingAndGlyphs">50</text>
<text x="65" y="580" fill="#c0c0c0" font-family="Liberation Mono" font-size="11" text-anchor="start" font-weight="normal" textLength="78.0" lengthAdjust="spacingAndGlyphs">RSI(14,14,14)</text>
<text x="148" y="580" fill="#ffffff" font-family="Liberation Mono" font-size="11" text-anchor="start" font-weight="normal" textLength="72.0" lengthAdjust="spacingAndGlyphs">RSI1:60.1905</text>
<text x="226" y="580" fill="#ffff00" font-family="Liberation Mono" font-size="11" text-anchor="start" font-weight="normal" textLength="72.0" lengthAdjust="spacingAndGlyphs">RSI2:60.1905</text>
<text x="304" y="580" fill="#ff00ff" font-family="Liberation Mono" font-size="11" text-anchor="start" font-weight="normal" textLength="72.0" lengthAdjust="spacingAndGlyphs">RSI3:60.1905</text>
<text x="58" y="618.0" fill="#c0c0c0" font-family="Liberation Mono" font-size="13" text-anchor="end" font-weight="normal" textLength="13.2" lengthAdjust="spacingAndGlyphs">80</text>
<text x="58" y="617.0" fill="#c0c0c0" font-family="Liberation Mono" font-size="13" text-anchor="end" font-weight="normal" textLength="13.2" lengthAdjust="spacingAndGlyphs">79</text>
<text x="58" y="649.0" fill="#c0c0c0" font-family="Liberation Mono" font-size="13" text-anchor="end" font-weight="normal" textLength="13.2" lengthAdjust="spacingAndGlyphs">65</text>
<text x="58" y="701.0" fill="#c0c0c0" font-family="Liberation Mono" font-size="13" text-anchor="end" font-weight="normal" textLength="13.2" lengthAdjust="spacingAndGlyphs">40</text>
<text x="58" y="723.0" fill="#c0c0c0" font-family="Liberation Mono" font-size="13" text-anchor="end" font-weight="normal" textLength="13.2" lengthAdjust="spacingAndGlyphs">30</text>
<text x="40" y="747" fill="#ffffff" font-family="Liberation Sans" font-size="12" text-anchor="start" font-weight="normal">5</text>
<text x="47.0" y="747" fill="#ffffff" font-family="Liberation Sans" font-size="11" font-weight="normal">分</text>
<text x="65" y="747" fill="#ffffff" font-family="Liberation Sans" font-size="12" text-anchor="start" font-weight="normal">1030</text>
<text x="449" y="747" fill="#ffffff" font-family="Liberation Sans" font-size="12" text-anchor="start" font-weight="normal">1102</text>
<rect x="671" y="734.5" width="70" height="15.5" fill="#1060ff" stroke="#c0d0ff"/>
<text x="673" y="746.5" fill="#ffffff" font-family="Liberation Mono" font-size="11" text-anchor="start" font-weight="normal" textLength="67.1" lengthAdjust="spacingAndGlyphs">11-02 11:00</text>
<text x="4.0" y="62" fill="#ffffff" font-family="Liberation Sans" font-size="12" font-weight="normal">欧</text><text x="16.0" y="62" fill="#ffffff" font-family="Liberation Sans" font-size="12" font-weight="normal">元</text><text x="28.0" y="62" fill="#ffffff" font-family="Liberation Sans" font-size="12" font-weight="normal">美</text><text x="40.0" y="62" fill="#ffffff" font-family="Liberation Sans" font-size="12" font-weight="normal">元</text>
<text x="52" y="62" fill="#ffffff" font-family="Liberation Mono" font-size="12" text-anchor="start" font-weight="normal" textLength="63.0" lengthAdjust="spacingAndGlyphs">(EURUSD)&lt;5</text>
<text x="113.0" y="62" fill="#ffffff" font-family="Liberation Sans" font-size="12" font-weight="normal">分</text>
<text x="125" y="62" fill="#ffffff" font-family="Liberation Sans" font-size="12" text-anchor="start" font-weight="normal">&gt;</text>
<rect x="754.5" y="50.5" width="15" height="13" fill="#000" stroke="#4080ff"/>
<rect x="771.5" y="50.5" width="15" height="13" fill="#000" stroke="#4080ff"/>
<path d="M757 57 L761 53.5 V55.5 H767 V58.5 H761 V60.5Z" fill="none" stroke="#80b0ff"/>
<path d="M783 57 L779 53.5 V55.5 H773 V58.5 H779 V60.5Z" fill="none" stroke="#80b0ff"/>
<rect x="628" y="334" width="160" height="84" fill="#ffffff"/>
<text stroke="#e00000" stroke-width="1.2" x="629.0" y="349" fill="#e00000" font-family="Liberation Sans" font-size="16" font-weight="bold">今</text><text stroke="#e00000" stroke-width="1.2" x="645.8" y="349" fill="#e00000" font-family="Liberation Sans" font-size="16" font-weight="bold">天</text><text stroke="#e00000" stroke-width="1.2" x="662.6" y="349" fill="#e00000" font-family="Liberation Sans" font-size="16" font-weight="bold">早</text><text stroke="#e00000" stroke-width="1.2" x="679.4" y="349" fill="#e00000" font-family="Liberation Sans" font-size="16" font-weight="bold">上</text><text stroke="#e00000" stroke-width="1.2" x="696.2" y="349" fill="#e00000" font-family="Liberation Sans" font-size="16" font-weight="bold">，</text><text stroke="#e00000" stroke-width="1.2" x="713.0" y="349" fill="#e00000" font-family="Liberation Sans" font-size="16" font-weight="bold">在</text><text stroke="#e00000" stroke-width="1.2" x="729.8" y="349" fill="#e00000" font-family="Liberation Sans" font-size="16" font-weight="bold">此</text><text stroke="#e00000" stroke-width="1.2" x="746.6" y="349" fill="#e00000" font-family="Liberation Sans" font-size="16" font-weight="bold">位</text><text stroke="#e00000" stroke-width="1.2" x="763.4" y="349" fill="#e00000" font-family="Liberation Sans" font-size="16" font-weight="bold">置</text>
<text stroke="#e00000" stroke-width="1.2" x="629.0" y="365" fill="#e00000" font-family="Liberation Sans" font-size="16" font-weight="bold">做</text><text stroke="#e00000" stroke-width="1.2" x="645.8" y="365" fill="#e00000" font-family="Liberation Sans" font-size="16" font-weight="bold">一</text><text stroke="#e00000" stroke-width="1.2" x="662.6" y="365" fill="#e00000" font-family="Liberation Sans" font-size="16" font-weight="bold">空</text><text stroke="#e00000" stroke-width="1.2" x="679.4" y="365" fill="#e00000" font-family="Liberation Sans" font-size="16" font-weight="bold">单</text><text stroke="#e00000" stroke-width="1.2" x="696.2" y="365" fill="#e00000" font-family="Liberation Sans" font-size="16" font-weight="bold">，</text><text stroke="#e00000" stroke-width="1.2" x="713.0" y="365" fill="#e00000" font-family="Liberation Sans" font-size="16" font-weight="bold">仔</text><text stroke="#e00000" stroke-width="1.2" x="729.8" y="365" fill="#e00000" font-family="Liberation Sans" font-size="16" font-weight="bold">细</text><text stroke="#e00000" stroke-width="1.2" x="746.6" y="365" fill="#e00000" font-family="Liberation Sans" font-size="16" font-weight="bold">看</text><text stroke="#e00000" stroke-width="1.2" x="763.4" y="365" fill="#e00000" font-family="Liberation Sans" font-size="16" font-weight="bold">看</text>
<text stroke="#e00000" stroke-width="1.2" x="629.0" y="381" fill="#e00000" font-family="Liberation Sans" font-size="16" font-weight="bold">技</text><text stroke="#e00000" stroke-width="1.2" x="645.8" y="381" fill="#e00000" font-family="Liberation Sans" font-size="16" font-weight="bold">术</text><text stroke="#e00000" stroke-width="1.2" x="662.6" y="381" fill="#e00000" font-family="Liberation Sans" font-size="16" font-weight="bold">进</text><text stroke="#e00000" stroke-width="1.2" x="679.4" y="381" fill="#e00000" font-family="Liberation Sans" font-size="16" font-weight="bold">场</text><text stroke="#e00000" stroke-width="1.2" x="696.2" y="381" fill="#e00000" font-family="Liberation Sans" font-size="16" font-weight="bold">点</text><text stroke="#e00000" stroke-width="1.2" x="713.0" y="381" fill="#e00000" font-family="Liberation Sans" font-size="16" font-weight="bold">没</text><text stroke="#e00000" stroke-width="1.2" x="729.8" y="381" fill="#e00000" font-family="Liberation Sans" font-size="16" font-weight="bold">有</text><text stroke="#e00000" stroke-width="1.2" x="746.6" y="381" fill="#e00000" font-family="Liberation Sans" font-size="16" font-weight="bold">，</text><text stroke="#e00000" stroke-width="1.2" x="763.4" y="381" fill="#e00000" font-family="Liberation Sans" font-size="16" font-weight="bold">立</text>
<text stroke="#e00000" stroke-width="1.2" x="629.0" y="397" fill="#e00000" font-family="Liberation Sans" font-size="16" font-weight="bold">即</text><text stroke="#e00000" stroke-width="1.2" x="645.8" y="397" fill="#e00000" font-family="Liberation Sans" font-size="16" font-weight="bold">出</text><text stroke="#e00000" stroke-width="1.2" x="662.6" y="397" fill="#e00000" font-family="Liberation Sans" font-size="16" font-weight="bold">场</text><text stroke="#e00000" stroke-width="1.2" x="679.4" y="397" fill="#e00000" font-family="Liberation Sans" font-size="16" font-weight="bold">。</text><text stroke="#e00000" stroke-width="1.2" x="696.2" y="397" fill="#e00000" font-family="Liberation Sans" font-size="16" font-weight="bold">损</text><text stroke="#e00000" stroke-width="1.2" x="713.0" y="397" fill="#e00000" font-family="Liberation Sans" font-size="16" font-weight="bold">8</text><text stroke="#e00000" stroke-width="1.2" x="722.6" y="397" fill="#e00000" font-family="Liberation Sans" font-size="16" font-weight="bold">点</text><text stroke="#e00000" stroke-width="1.2" x="739.4" y="397" fill="#e00000" font-family="Liberation Sans" font-size="16" font-weight="bold">。</text>
</svg>
<!-- MENU -->
<div class="a" id="menu">
 <div class="a" style="left:800px;top:0;width:209px;height:2px;background:#30c8f0"></div>
 <div class="a" style="left:942px;top:2px;width:82px;height:23px;background:#d2d4f4;clip-path:polygon(0 100%,17px 0,100% 0,100% 100%)"></div>
 <div class="a" style="left:1009px;top:0;width:15px;height:2px;background:#d2d4f4"></div>
 <div class="a" style="left:3px;top:5px;width:15px;height:15px;border-radius:50%;background:#f4f4fc;border:1px solid #8088b0"></div>
 <div class="a" style="left:7px;top:9px;width:7px;height:7px;transform:rotate(45deg);border:2px solid #2838a0"></div>
 <span class="a t cj" style="left:27px"><i class="c">系</i><i class="c">统</i></span>
 <span class="a t cj" style="left:67px"><i class="c">页</i><i class="c">面</i></span>
 <span class="a t cj" style="left:108px"><i class="c">图</i><i class="c">表</i></span>
 <span class="a t cj" style="left:147px"><i class="c">分</i><i class="c">析</i></span>
 <span class="a t cj" style="left:187px"><i class="c">新</i><i class="c">闻</i></span>
 <span class="a t cj" style="left:228px"><i class="c">中</i><i class="c">信</i><i class="c">建</i><i class="c">投</i><i class="c">专</i><i class="c">栏</i></span>
 <span class="a t cj" style="left:316px"><i class="c">手</i><i class="c">机</i><i class="c">行</i><i class="c">情</i></span>
 <span class="a t cj" style="left:379px"><i class="c">交</i><i class="c">易</i></span>
 <span class="a t cj" style="left:419px"><i class="c">工</i><i class="c">具</i></span>
 <span class="a t cj" style="left:459px"><i class="c">帮</i><i class="c">助</i></span>
 <span class="a cj ttl" style="left:632px;top:2px;font-size:18px;letter-spacing:0;color:#f01010;-webkit-text-stroke:1px #f01010"><i class="c">中</i><i class="c">信</i><i class="c">建</i><i class="c">投</i>-<i class="c">博</i><i class="c">易</i><i class="c">大</i><i class="c">师</i></span>
 <div class="a" style="left:964px;top:4px;width:16px;height:16px;border-radius:50%;background:#f0f0f8;border:2px solid #9098b8"></div>
 <div class="a" style="left:984px;top:4px;width:16px;height:16px;border-radius:50%;background:#f0f0f8;border:2px solid #9098b8"></div>
 <div class="a" style="left:1004px;top:4px;width:16px;height:16px;border-radius:50%;background:#f0f0f8;border:2px solid #9098b8"></div>
 <div class="a" style="left:969px;top:13px;width:6px;height:2px;background:#203060"></div>
 <div class="a" style="left:988px;top:9px;width:8px;height:6px;border:2px solid #203060"></div>
 <svg class="a" style="left:1004px;top:4px" width="16" height="16"><path d="M4.5 4.5L11.5 11.5M11.5 4.5L4.5 11.5" stroke="#203060" stroke-width="2"/></svg>
</div>
<!-- TOOLBAR -->
<div class="a" id="tool">
 <div class="sep" style="left:154px"></div>
 <div class="sep" style="left:312px"></div>
 <div class="sep" style="left:418px"></div>
 <div class="a" style="left:316px;top:1px;width:25px;height:22px;border:1px solid #304030;border-radius:3px;background:#d4f0c4"></div>
<svg class="a" style="left:0;top:0" width="1024" height="23"><g transform="translate(4,4)"><rect x="0.5" y="0.5" width="15" height="15" rx="3" fill="#78a4e0" stroke="#4070b8"/><path d="M3 8 L7 4.5 V6.5 H12 V9.5 H7 V11.5Z" fill="#fff"/></g><g transform="translate(29,4)"><rect x="0.5" y="0.5" width="15" height="15" fill="#f4f8ff" stroke="#1858c8"/><rect x="0.5" y="0.5" width="15" height="3" fill="#2868d8"/><path d="M2 12 L5 8 L8 10 L13 5" fill="none" stroke="#f01010" stroke-width="1.6"/></g><g transform="translate(54,4)"><rect x="0.5" y="0.5" width="15" height="15" fill="#f4f8ff" stroke="#1858c8"/><rect x="0.5" y="0.5" width="15" height="3" fill="#2868d8"/><path d="M4 5V13M12 5V13" stroke="#2050c0" stroke-width="1.5"/><path d="M8 4V12" stroke="#f01010" stroke-width="2.5"/><path d="M2 11 Q8 5 14 11" fill="none" stroke="#f0e000" stroke-width="1.2"/></g><g transform="translate(79,4)"><rect x="0.5" y="0.5" width="15" height="15" fill="#f4f8ff" stroke="#1858c8"/><rect x="0.5" y="0.5" width="15" height="3" fill="#2868d8"/><path d="M3 6H7M9 6H13" stroke="#30a030" stroke-width="1.5"/><path d="M3 9H7M9 9H13" stroke="#f06020" stroke-width="1.5"/><path d="M3 12H7M9 12H13" stroke="#2050c0" stroke-width="1.2"/></g><g transform="translate(104,4)"><rect x="0.5" y="0.5" width="15" height="15" fill="#f4f8ff" stroke="#1858c8"/><rect x="0.5" y="0.5" width="15" height="3" fill="#2868d8"/><path d="M3 6H9M3 9H8M3 12H7" stroke="#2050c0" stroke-width="1.5"/><circle cx="11.5" cy="11" r="3.5" fill="#3080c0"/><path d="M10 9.5 Q12 11 11 13" stroke="#40b040" stroke-width="1.5" fill="none"/></g><g transform="translate(129,4)"><rect x="0.5" y="0.5" width="15" height="15" fill="#f4f8ff" stroke="#1858c8"/><rect x="0.5" y="0.5" width="15" height="3" fill="#2868d8"/><text x="8" y="13.5" text-anchor="middle" font-family="Liberation Sans" font-size="9" font-weight="bold" fill="#1840a0">Fio</text></g><g transform="translate(162,4)"><path d="M2.5 0.5H10.5L13.5 3.5V15.5H2.5Z" fill="#f8f8f0" stroke="#8090a8"/><path d="M5 7 A3.5 3.5 0 0 1 11 6 M11 10 A3.5 3.5 0 0 1 5 11" fill="none" stroke="#30a030" stroke-width="1.8"/></g><g transform="translate(188,4)"><circle cx="10" cy="6" r="4.5" fill="#f0f0f8" stroke="#404050" stroke-width="1.3"/><path d="M7.5 6H12.5M10 3.5V8.5" stroke="#202030" stroke-width="1.3"/><path d="M6.5 9.5 L1.5 14.5" stroke="#e0a030" stroke-width="2.5"/></g><g transform="translate(212,4)"><circle cx="10" cy="6" r="4.5" fill="#f0f0f8" stroke="#404050" stroke-width="1.3"/><path d="M7.5 6H12.5" stroke="#202030" stroke-width="1.3"/><path d="M6.5 9.5 L1.5 14.5" stroke="#e0a030" stroke-width="2.5"/></g><g transform="translate(238,4)"><rect x="1" y="1" width="5" height="4" fill="#f0c040" stroke="#404040" stroke-width=".6"/><rect x="10" y="1" width="5" height="4" fill="#f02020"/><path d="M5 7H11V14C11 15 5 15 5 14Z" fill="#fff0e0" stroke="#303030"/><path d="M7 7V3H9V7" fill="#fff0e0" stroke="#303030"/></g><g transform="translate(262,4)"><rect x="0.5" y="0.5" width="11" height="9" fill="#e8f0ff" stroke="#2050c0"/><rect x="4.5" y="5.5" width="11" height="10" fill="#e8f0ff" stroke="#2050c0"/><path d="M6 6 L13 13 M13 8V13H8" fill="none" stroke="#f02020" stroke-width="2"/></g><g transform="translate(287,4)"><rect x="9.5" y="0.5" width="6" height="15" fill="#fff" stroke="#2050c0"/><path d="M12 2V14" stroke="#f02020" stroke-dasharray="1 1"/><path d="M1 8H8M5 4.5 L8.5 8 L5 11.5" fill="none" stroke="#2060d0" stroke-width="2.2"/><rect x="0.5" y="2.5" width="9" height="11" fill="none" stroke="#2050c0"/></g><g transform="translate(320,4)"><rect x="0.5" y="0.5" width="15" height="15" fill="#fff" stroke="#2050c0"/><rect x="0.5" y="0.5" width="15" height="3" fill="#2868d8"/><path d="M3 13 L12 5" stroke="#2050a0" stroke-width="2.2"/></g><g transform="translate(344,4)"><path d="M8 1 C4 2 4 6 4 9 L2 12 H14 L12 9 C12 6 12 2 8 1Z" fill="#f02020" stroke="#801010"/><circle cx="8" cy="14" r="1.5" fill="#801010"/></g><g transform="translate(370,4)"><circle cx="5" cy="5" r="3" fill="#e8b080" stroke="#303030" stroke-width=".7"/><path d="M0 15 C0 9 10 9 10 15Z" fill="#2050b0"/><circle cx="11" cy="5" r="3" fill="#f0c090" stroke="#303030" stroke-width=".7"/><path d="M6 15 C6 9 16 9 16 15Z" fill="#40a040"/></g><g transform="translate(392,4)"><path d="M9 0 L3 9 H7 L5 16 L13 6 H9 L12 0Z" fill="#f0c000" stroke="#a06000" stroke-width=".7"/></g></svg>
 <span class="a t cj" style="left:429px"><i class="c">日</i></span>
 <span class="a t cj" style="left:454px"><i class="c">周</i></span>
 <span class="a t cj" style="left:479px"><i class="c">月</i></span>
 <span class="a t cj" style="left:504px"><i class="c">季</i></span>
 <span class="a t" style="left:531px">×</span>
 <span class="a t" style="left:557px">1</span>
 <span class="a t" style="left:582px">3</span>
 <div class="a" style="left:599px;top:0px;width:25px;height:22px;border:1px solid #203020;border-radius:3px;background:#d8f4c8"></div>
 <span class="a t" style="left:608px">5</span>
 <span class="a t" style="left:629px">15</span>
 <span class="a t" style="left:653px">30</span>
 <span class="a t" style="left:678px">60</span>
 <span class="a t" style="left:701px">2hr</span>
 <span class="a t" style="left:726px">4hr</span>
 <span class="a t" style="left:756px">Y</span>
</div>
<div class="a" style="left:789px;top:48px;width:235px;height:702px;background:#000"></div>
<div class="a" style="left:789px;top:71px;width:232px;height:1px;background:#c80000"></div>
<div class="a" style="left:789px;top:92px;width:232px;height:1px;background:#c80000"></div>
<div class="a" style="left:789px;top:113px;width:232px;height:1px;background:#c80000"></div>
<div class="a" style="left:789px;top:235px;width:232px;height:1px;background:#c80000"></div>
<div class="a" style="left:789px;top:256px;width:232px;height:1px;background:#c80000"></div>
<div class="a" style="left:1020px;top:48px;width:1px;height:209px;background:#e00000"></div>
<div class="a" style="left:788px;top:48px;width:1px;height:702px;background:#e00000"></div>
<span class="a cj" style="left:824px;top:50px;font-size:19px;color:#e8e800"><i class="c">欧</i><i class="c">元</i><i class="c">美</i><i class="c">元</i></span>
<span class="a" style="left:902px;top:50px;font-size:17px;color:#e8e800;font-weight:bold;font-family:'Liberation Serif'">(EURUSD)</span>
<div class="a" style="left:1003px;top:51px;width:17px;height:13px;border:1px solid #4080ff"></div>
<div class="a" style="left:1006px;top:54px;width:11px;height:7px;border:1px solid #80b0ff"></div>
<span class="a cj" style="left:794px;top:75.5px;font-size:12px;color:#fff"><i class="c">卖</i><i class="c">出</i></span>
<span class="a" style="left:815px;width:80px;text-align:right;top:75.5px;font-size:13px;color:#ff3c3c">1.3935</span>
<span class="a" style="left:936px;width:80px;text-align:right;top:75.5px;font-size:13px;color:#ffff00">1329</span>
<span class="a cj" style="left:794px;top:95.5px;font-size:12px;color:#fff"><i class="c">买</i><i class="c">入</i></span>
<span class="a" style="left:815px;width:80px;text-align:right;top:95.5px;font-size:13px;color:#ff3c3c">1.3933</span>
<span class="a" style="left:936px;width:80px;text-align:right;top:95.5px;font-size:13px;color:#ffff00">0</span>
<span class="a cj" style="left:794px;top:116.5px;font-size:12px;color:#fff"><i class="c">最</i><i class="c">新</i></span>
<span class="a" style="left:815px;width:80px;text-align:right;top:116.5px;font-size:13px;color:#ff3c3c">1.3933</span>
<span class="a cj" style="left:915px;top:116.5px;font-size:12px;color:#fff"><i class="c">均</i><i class="c">价</i></span>
<span class="a" style="left:936px;width:80px;text-align:right;top:116.5px;font-size:13px;color:#ffffff">0.0000</span>
<span class="a cj" style="left:794px;top:136.5px;font-size:12px;color:#fff"><i class="c">涨</i><i class="c">跌</i></span>
<span class="a" style="left:815px;width:80px;text-align:right;top:136.5px;font-size:13px;color:#ff3c3c">0.0041</span>
<span class="a cj" style="left:915px;top:136.5px;font-size:12px;color:#fff"><i class="c">昨</i><i class="c">收</i></span>
<span class="a" style="left:936px;width:80px;text-align:right;top:136.5px;font-size:13px;color:#ffffff">1.3892</span>
<span class="a cj" style="left:794px;top:156.5px;font-size:12px;color:#fff"><i class="c">幅</i><i class="c">度</i></span>
<span class="a" style="left:815px;width:80px;text-align:right;top:156.5px;font-size:13px;color:#ff3c3c">0.30%</span>
<span class="a cj" style="left:915px;top:156.5px;font-size:12px;color:#fff"><i class="c">开</i><i class="c">盘</i></span>
<span class="a" style="left:936px;width:80px;text-align:right;top:156.5px;font-size:13px;color:#ffffff">1.3892</span>
<span class="a cj" style="left:794px;top:176.5px;font-size:12px;color:#fff"><i class="c">总</i><i class="c">手</i></span>
<span class="a" style="left:815px;width:80px;text-align:right;top:176.5px;font-size:13px;color:#ffff00">0</span>
<span class="a cj" style="left:915px;top:176.5px;font-size:12px;color:#fff"><i class="c">最</i><i class="c">高</i></span>
<span class="a" style="left:936px;width:80px;text-align:right;top:176.5px;font-size:13px;color:#ff3c3c">1.3936</span>
<span class="a cj" style="left:794px;top:196.5px;font-size:12px;color:#fff"><i class="c">现</i><i class="c">手</i></span>
<span class="a" style="left:815px;width:80px;text-align:right;top:196.5px;font-size:13px;color:#ffff00">0</span>
<span class="a cj" style="left:915px;top:196.5px;font-size:12px;color:#fff"><i class="c">最</i><i class="c">低</i></span>
<span class="a" style="left:936px;width:80px;text-align:right;top:196.5px;font-size:13px;color:#00e000">1.3881</span>
<span class="a cj" style="left:794px;top:216.5px;font-size:12px;color:#fff"><i class="c">金</i><i class="c">额</i></span>
<span class="a" style="left:815px;width:80px;text-align:right;top:216.5px;font-size:13px;color:#ffff00">0.00</span>
<span class="a cj" style="left:915px;top:216.5px;font-size:12px;color:#fff"><i class="c">量</i><i class="c">比</i></span>
<span class="a" style="left:936px;width:80px;text-align:right;top:216.5px;font-size:13px;color:#ffffff">1.00</span>
<span class="a cj" style="left:794px;top:237.5px;font-size:12px;color:#fff"><i class="c">外</i><i class="c">盘</i></span>
<span class="a" style="left:936px;width:80px;text-align:right;top:236.5px;font-size:13px;color:#00e000">---</span>
<span class="a cj" style="left:794px;top:258.5px;font-size:12px;color:#a0a0a0"><i class="c">北</i><i class="c">京</i></span>
<span class="a cj" style="left:974px;top:258.5px;font-size:12px;color:#a0a0a0"><i class="c">现</i><i class="c">手</i></span>
<span class="a" style="left:794px;top:283px;font-size:13px;color:#fff">14:14</span>
<span class="a" style="left:919px;width:80px;text-align:right;top:283px;font-size:13px;color:#ffffff">0</span>
<span class="a" style="left:794px;top:305px;font-size:13px;color:#fff">14:15</span>
<span class="a" style="left:919px;width:80px;text-align:right;top:305px;font-size:13px;color:#00e000">0</span>
<span class="a" style="left:794px;top:327px;font-size:13px;color:#fff">14:15</span>
<span class="a" style="left:919px;width:80px;text-align:right;top:327px;font-size:13px;color:#ffffff">0</span>
<span class="a" style="left:794px;top:349px;font-size:13px;color:#fff">14:15</span>
<span class="a" style="left:919px;width:80px;text-align:right;top:349px;font-size:13px;color:#00e000">0</span>
<span class="a" style="left:794px;top:371px;font-size:13px;color:#fff">14:15</span>
<span class="a" style="left:919px;width:80px;text-align:right;top:371px;font-size:13px;color:#ffffff">0</span>
<span class="a" style="left:794px;top:393px;font-size:13px;color:#fff">14:15</span>
<span class="a" style="left:919px;width:80px;text-align:right;top:393px;font-size:13px;color:#00e000">0</span>
<span class="a" style="left:794px;top:415px;font-size:13px;color:#fff">14:15</span>
<span class="a" style="left:919px;width:80px;text-align:right;top:415px;font-size:13px;color:#ffffff">0</span>
<span class="a" style="left:794px;top:437px;font-size:13px;color:#fff">14:15</span>
<span class="a" style="left:919px;width:80px;text-align:right;top:437px;font-size:13px;color:#00e000">0</span>
<span class="a" style="left:794px;top:459px;font-size:13px;color:#fff">14:15</span>
<span class="a" style="left:919px;width:80px;text-align:right;top:459px;font-size:13px;color:#ffffff">0</span>
<span class="a" style="left:794px;top:481px;font-size:13px;color:#fff">14:15</span>
<span class="a" style="left:919px;width:80px;text-align:right;top:481px;font-size:13px;color:#00e000">0</span>
<span class="a" style="left:794px;top:503px;font-size:13px;color:#fff">14:16</span>
<span class="a" style="left:919px;width:80px;text-align:right;top:503px;font-size:13px;color:#ffffff">0</span>
<span class="a" style="left:794px;top:525px;font-size:13px;color:#fff">14:16</span>
<span class="a" style="left:837px;width:80px;text-align:right;top:525px;font-size:13px;color:#ff3c3c">1.3933</span>
<span class="a" style="left:919px;width:80px;text-align:right;top:525px;font-size:13px;color:#00e000">0</span>
<span class="a" style="left:794px;top:547px;font-size:13px;color:#fff">14:16</span>
<span class="a" style="left:837px;width:80px;text-align:right;top:547px;font-size:13px;color:#ff3c3c">1.3934</span>
<span class="a" style="left:919px;width:80px;text-align:right;top:547px;font-size:13px;color:#ffffff">0</span>
<span class="a" style="left:794px;top:569px;font-size:13px;color:#fff">14:16</span>
<span class="a" style="left:837px;width:80px;text-align:right;top:569px;font-size:13px;color:#ff3c3c">1.3933</span>
<span class="a" style="left:919px;width:80px;text-align:right;top:569px;font-size:13px;color:#00e000">0</span>
<span class="a" style="left:794px;top:591px;font-size:13px;color:#fff">14:16</span>
<span class="a" style="left:837px;width:80px;text-align:right;top:591px;font-size:13px;color:#ff3c3c">1.3932</span>
<span class="a" style="left:919px;width:80px;text-align:right;top:591px;font-size:13px;color:#00e000">0</span>
<span class="a" style="left:794px;top:613px;font-size:13px;color:#fff">14:17</span>
<span class="a" style="left:837px;width:80px;text-align:right;top:613px;font-size:13px;color:#ff3c3c">1.3933</span>
<span class="a" style="left:919px;width:80px;text-align:right;top:613px;font-size:13px;color:#ffffff">0</span>
<span class="a" style="left:794px;top:635px;font-size:13px;color:#fff">14:17</span>
<span class="a" style="left:837px;width:80px;text-align:right;top:635px;font-size:13px;color:#ff3c3c">1.3931</span>
<span class="a" style="left:919px;width:80px;text-align:right;top:635px;font-size:13px;color:#00e000">0</span>
<span class="a" style="left:794px;top:657px;font-size:13px;color:#fff">14:17</span>
<span class="a" style="left:837px;width:80px;text-align:right;top:657px;font-size:13px;color:#ff3c3c">1.3932</span>
<span class="a" style="left:919px;width:80px;text-align:right;top:657px;font-size:13px;color:#ffffff">0</span>
<span class="a" style="left:794px;top:679px;font-size:13px;color:#fff">14:17</span>
<span class="a" style="left:837px;width:80px;text-align:right;top:679px;font-size:13px;color:#ff3c3c">1.3933</span>
<span class="a" style="left:919px;width:80px;text-align:right;top:679px;font-size:13px;color:#ffffff">0</span>
<span class="a" style="left:794px;top:701px;font-size:13px;color:#fff">14:17</span>
<span class="a" style="left:837px;width:80px;text-align:right;top:701px;font-size:13px;color:#ff3c3c">1.3934</span>
<span class="a" style="left:919px;width:80px;text-align:right;top:701px;font-size:13px;color:#ffffff">0</span>
<span class="a" style="left:794px;top:723px;font-size:13px;color:#fff">14:17</span>
<span class="a" style="left:837px;width:80px;text-align:right;top:723px;font-size:13px;color:#ff3c3c">1.3933</span>
<span class="a" style="left:919px;width:80px;text-align:right;top:723px;font-size:13px;color:#ff3c3c">0</span>
<div class="a" style="left:1004px;top:257px;width:17px;height:484px;background:#ebebeb"></div>
<div class="a" style="left:1021px;top:48px;width:3px;height:702px;background:#c4c8dc"></div>
<div class="a" style="left:1005px;top:258px;width:15px;height:16px;background:linear-gradient(#dce4fc,#b8c8f4);border:1px solid #98a8e0;border-radius:2px"></div><svg class="a" style="left:1005px;top:258px" width="15" height="16"><path d="M3.5 10 L7.5 6 L11.5 10" fill="none" stroke="#4a5a90" stroke-width="2"/></svg>
<div class="a" style="left:1005px;top:707px;width:15px;height:16px;background:linear-gradient(to right,#c8d4fa,#b0c0f0);border:1px solid #98a8e0;border-radius:2px"></div>
<div class="a" style="left:1009px;top:711px;width:7px;height:8px;border-top:1px solid #8898d0;border-bottom:1px solid #8898d0"></div>
<div class="a" style="left:1005px;top:724px;width:15px;height:16px;background:linear-gradient(#dce4fc,#b8c8f4);border:1px solid #98a8e0;border-radius:2px"></div><svg class="a" style="left:1005px;top:724px" width="15" height="16"><path d="M3.5 6 L7.5 10 L11.5 6" fill="none" stroke="#4a5a90" stroke-width="2"/></svg>
<div class="a" style="left:860px;top:235px;width:84px;height:283px;background:#8c94e4;border:1px solid #6870c8"></div>
<div class="a" style="left:862px;top:236px;width:80px;height:19px;background:linear-gradient(to right,#b4c0f4,#90a0ec 60%,#8898e8)"></div>
<span class="a cj" style="left:865px;top:238px;font-size:13px;color:#fff;font-weight:bold"><i class="c">画</i><i class="c">线</i></span>
<div class="a" style="left:925px;top:240px;width:13px;height:13px;background:#b890b8;border:1px solid #f0e8f0"></div>
<svg class="a" style="left:925px;top:240px" width="13" height="13"><path d="M3.5 3.5L9.5 9.5M9.5 3.5L3.5 9.5" stroke="#fff" stroke-width="2.2"/></svg>
<div class="a" style="left:863px;top:256px;width:78px;height:259px;background:#ecead8"></div>
<svg class="a" style="left:0;top:0" width="1024" height="768"><line x1="870.5" y1="262" x2="880.5" y2="274" stroke="#101010" stroke-width="1.3"/><line x1="896.5" y1="263" x2="906.5" y2="273" stroke="#101010" stroke-width="1.3"/><circle cx="896.5" cy="263" r="1.3" fill="#101010"/><circle cx="906.5" cy="273" r="1.3" fill="#101010"/><line x1="921.5" y1="271" x2="930.5" y2="262" stroke="#101010" stroke-width="1.3"/><line x1="924.5" y1="274" x2="933.5" y2="265" stroke="#101010" stroke-width="1.3"/><line x1="868.5" y1="294.5" x2="882.5" y2="294.5" stroke="#101010" stroke-width="1.3"/><line x1="868.5" y1="292.5" x2="868.5" y2="296.5" stroke="#101010" stroke-width="1.3"/><line x1="901.5" y1="287.5" x2="901.5" y2="301.5" stroke="#101010" stroke-width="1.3"/><line x1="899.5" y1="287.5" x2="903.5" y2="287.5" stroke="#101010" stroke-width="1.3"/><rect x="922.5" y="290.5" width="10" height="7" fill="none" stroke="#101010" stroke-width="1.2"/><line x1="880.5" y1="314.5" x2="870.5" y2="325.5" stroke="#101010" stroke-width="1.3"/><circle cx="870.5" cy="325.5" r="1.3" fill="#101010"/><line x1="896.5" y1="315.5" x2="907.5" y2="326.5" stroke="#101010" stroke-width="1.3"/><circle cx="896.5" cy="315.5" r="1.3" fill="#101010"/><path d="M922.5 322.5 C922.5 312.5 927.5 314.5 927.5 320.5 S932.5 328.5 932.5 318.5" fill="none" stroke="#101010" stroke-width="1.2"/><path d="M870.5 342 H875.5 A5 5 0 0 1 875.5 352 H870.5" fill="none" stroke="#101010" stroke-width="1.3"/><path d="M907.5 341 L895.5 352 H907.5 M895.5 352 L907.5 346 M895.5 352 L907.5 349" fill="none" stroke="#1040b0" stroke-width="1.2"/><line x1="895.5" y1="352" x2="907.5" y2="352" stroke="#101010" stroke-width="1.3"/><path d="M921.5 341 V352 H933.5 M921.5 352 L931.5 341 M921.5 352 L933.5 344 M921.5 352 L933.5 347 M921.5 352 L933.5 350" fill="none" stroke="#1040b0" stroke-width="1.1"/><line x1="921.5" y1="341" x2="921.5" y2="352" stroke="#101010" stroke-width="1.3"/><path d="M869.5 367.5H881.5M874.5 370.5H881.5M874.5 372.5H881.5M874.5 374.5H881.5M869.5 376.5H881.5M869.5 379.0H881.5" stroke="#1040b0" stroke-width="1.1"/><text x="869.5" y="375.0" font-size="7" font-weight="bold" fill="#1040b0" font-family="Liberation Sans">G</text><path d="M895.5 367.5H907.5M900.5 370.5H907.5M900.5 372.5H907.5M900.5 374.5H907.5M895.5 376.5H907.5M895.5 379.0H907.5" stroke="#1040b0" stroke-width="1.1"/><text x="895.5" y="375.0" font-size="7" font-weight="bold" fill="#1040b0" font-family="Liberation Sans">%</text><path d="M921.5 367.5H933.5M926.5 370.5H933.5M926.5 372.5H933.5M926.5 374.5H933.5M921.5 376.5H933.5M921.5 379.0H933.5" stroke="#1040b0" stroke-width="1.1"/><text x="921.5" y="375.0" font-size="7" font-weight="bold" fill="#1040b0" font-family="Liberation Sans">%</text><path d="M870.5 393V405M873.5 393V405M876.5 393V405M879.5 393V405" stroke="#101010" stroke-width="1.1"/><line x1="870.5" y1="393" x2="870.5" y2="405" stroke="#1040b0" stroke-width="1.3"/><path d="M895.5 393V405M898.5 393V405M901.5 393V405M904.5 393V405M907.5 393V405" stroke="#101010" stroke-width="1.1"/><line x1="895.5" y1="393" x2="895.5" y2="405" stroke="#1040b0" stroke-width="1.3"/><path d="M921.5 393V405M933.5 393V405M921.5 399L933.5 395M921.5 403L933.5 399" stroke="#101010" stroke-width="1.1"/><line x1="921.5" y1="405" x2="933.5" y2="401" stroke="#1040b0" stroke-width="1.3"/><path d="M870.5 418.5V430.5M877.5 418.5V430.5M869.5 424.5L881.5 420.5M869.5 428.5L881.5 424.5" stroke="#101010" stroke-width="1.1"/><line x1="869.5" y1="430.5" x2="881.5" y2="426.5" stroke="#1040b0" stroke-width="1.3"/><text x="901.5" y="430.5" font-size="16" text-anchor="middle" fill="#102050" font-family="Liberation Sans">A</text><circle cx="927.5" cy="424.5" r="6.5" fill="#e0e0f0" stroke="#5060a0" stroke-width="1.3"/><circle cx="927.5" cy="424.5" r="4" fill="none" stroke="#e04040" stroke-width="1.5" stroke-dasharray="1.5 1"/><path transform="translate(875.5,450) rotate(0)" d="M0 -6 L6 0 H2.5 V6 H-2.5 V0 H-6Z" fill="#f03010" stroke="#601000" stroke-width="1"/><path transform="translate(901.5,450) rotate(45)" d="M0 -6 L6 0 H2.5 V6 H-2.5 V0 H-6Z" fill="#f02010" stroke="#601000" stroke-width="1"/><path transform="translate(927.5,450) rotate(-45)" d="M0 -6 L6 0 H2.5 V6 H-2.5 V0 H-6Z" fill="#f02010" stroke="#601000" stroke-width="1"/><path transform="translate(875.5,476.5) rotate(180)" d="M0 -6 L6 0 H2.5 V6 H-2.5 V0 H-6Z" fill="#60c030" stroke="#205010" stroke-width="1"/><path transform="translate(901.5,476.5) rotate(135)" d="M0 -6 L6 0 H2.5 V6 H-2.5 V0 H-6Z" fill="#60c030" stroke="#205010" stroke-width="1"/><path transform="translate(927.5,476.5) rotate(-135)" d="M0 -6 L6 0 H2.5 V6 H-2.5 V0 H-6Z" fill="#60c030" stroke="#205010" stroke-width="1"/><path d="M868.5 506.5 L873.5 498.5 H882.5 L877.5 506.5Z" fill="#f0e020" stroke="#605000" stroke-width="1"/><rect x="873.5" y="506.5" width="9" height="2" fill="#808080"/><path d="M908.5 500.5H915.5" stroke="#2050c0" stroke-width="2.5"/><path d="M907.5 500.5L911.5 497.5V503.5Z" fill="#2050c0"/><rect x="915.5" y="496.5" width="5" height="2" fill="#e03020"/><rect x="909.5" y="504.5" width="6" height="2.5" fill="#e03020"/><path d="M918.5 499.5H922.5M918.5 502.5H922.5M918.5 505.5H922.5M918.5 508.5H922.5" stroke="#202020" stroke-width="1"/></svg>
<div class="a" id="status">
 <span class="a t cj" style="left:2px;color:#0020e0"><i class="c">沪</i></span>
 <span class="a t" style="left:25px;color:#f01010">3060.62</span>
 <span class="a t" style="left:97px;color:#f01010">6.60</span>
 <span class="a t" style="left:118px;color:#000">2610.7</span>
 <span class="a t cj" style="left:157px;color:#000"><i class="c">亿</i></span>
 <div class="a" style="left:179px;top:1px;width:2px;height:16px;border-left:1px solid #9098c0;border-right:1px solid #fff"></div>
 <span class="a t cj" style="left:190px;color:#0020e0"><i class="c">深</i></span>
 <span class="a t" style="left:207px;color:#f01010">13775.58</span>
 <span class="a t" style="left:281px;color:#f01010">31.81</span>
 <span class="a t" style="left:311px;color:#000">1991.7</span>
 <span class="a t cj" style="left:350px;color:#000"><i class="c">亿</i></span>
 <div class="a" style="left:366px;top:1px;width:2px;height:16px;border-left:1px solid #9098c0;border-right:1px solid #fff"></div>
 <span class="a t cj" style="left:743px;font-weight:normal;color:#000"><i class="c">〖</i><i class="c">金</i><i class="c">属</i><i class="c">市</i><i class="c">场</i><i class="c">〗</i><i class="c">中</i><i class="c">国</i></span>
 <div class="a" style="left:833px;top:0;width:82px;height:17px;background:#0000ff"></div>
 <span class="a t" style="left:836px;color:#ffff00;font-size:14px;top:0">▲1</span>
 <span class="a t" style="left:917px;color:#1020d0;font-size:14px;top:-1px;letter-spacing:-0.6px">po<span style="color:#f01010">b</span>o</span>
 <div class="a" style="left:953px;top:1px;width:2px;height:16px;border-left:1px solid #9098c0;border-right:1px solid #fff"></div>
 <svg class="a" style="left:960px;top:2px" width="24" height="15"><path d="M1 1 L5 6 L9 1 M5 6 V13" fill="none" stroke="#1030c0" stroke-width="2.2"/><rect x="12" y="10" width="2" height="3" fill="#1030c0"/><rect x="16" y="7" width="2" height="6" fill="#1030c0"/><rect x="20" y="3" width="2" height="10" fill="#1030c0"/></svg>
 <div class="a" style="left:985px;top:1px;width:2px;height:16px;border-left:1px solid #9098c0;border-right:1px solid #fff"></div>
 <span class="a t" style="left:988px;color:#1030c0;font-weight:normal;font-size:13px;top:1px;letter-spacing:-0.3px">14:18</span>
</div>

</body></html>
